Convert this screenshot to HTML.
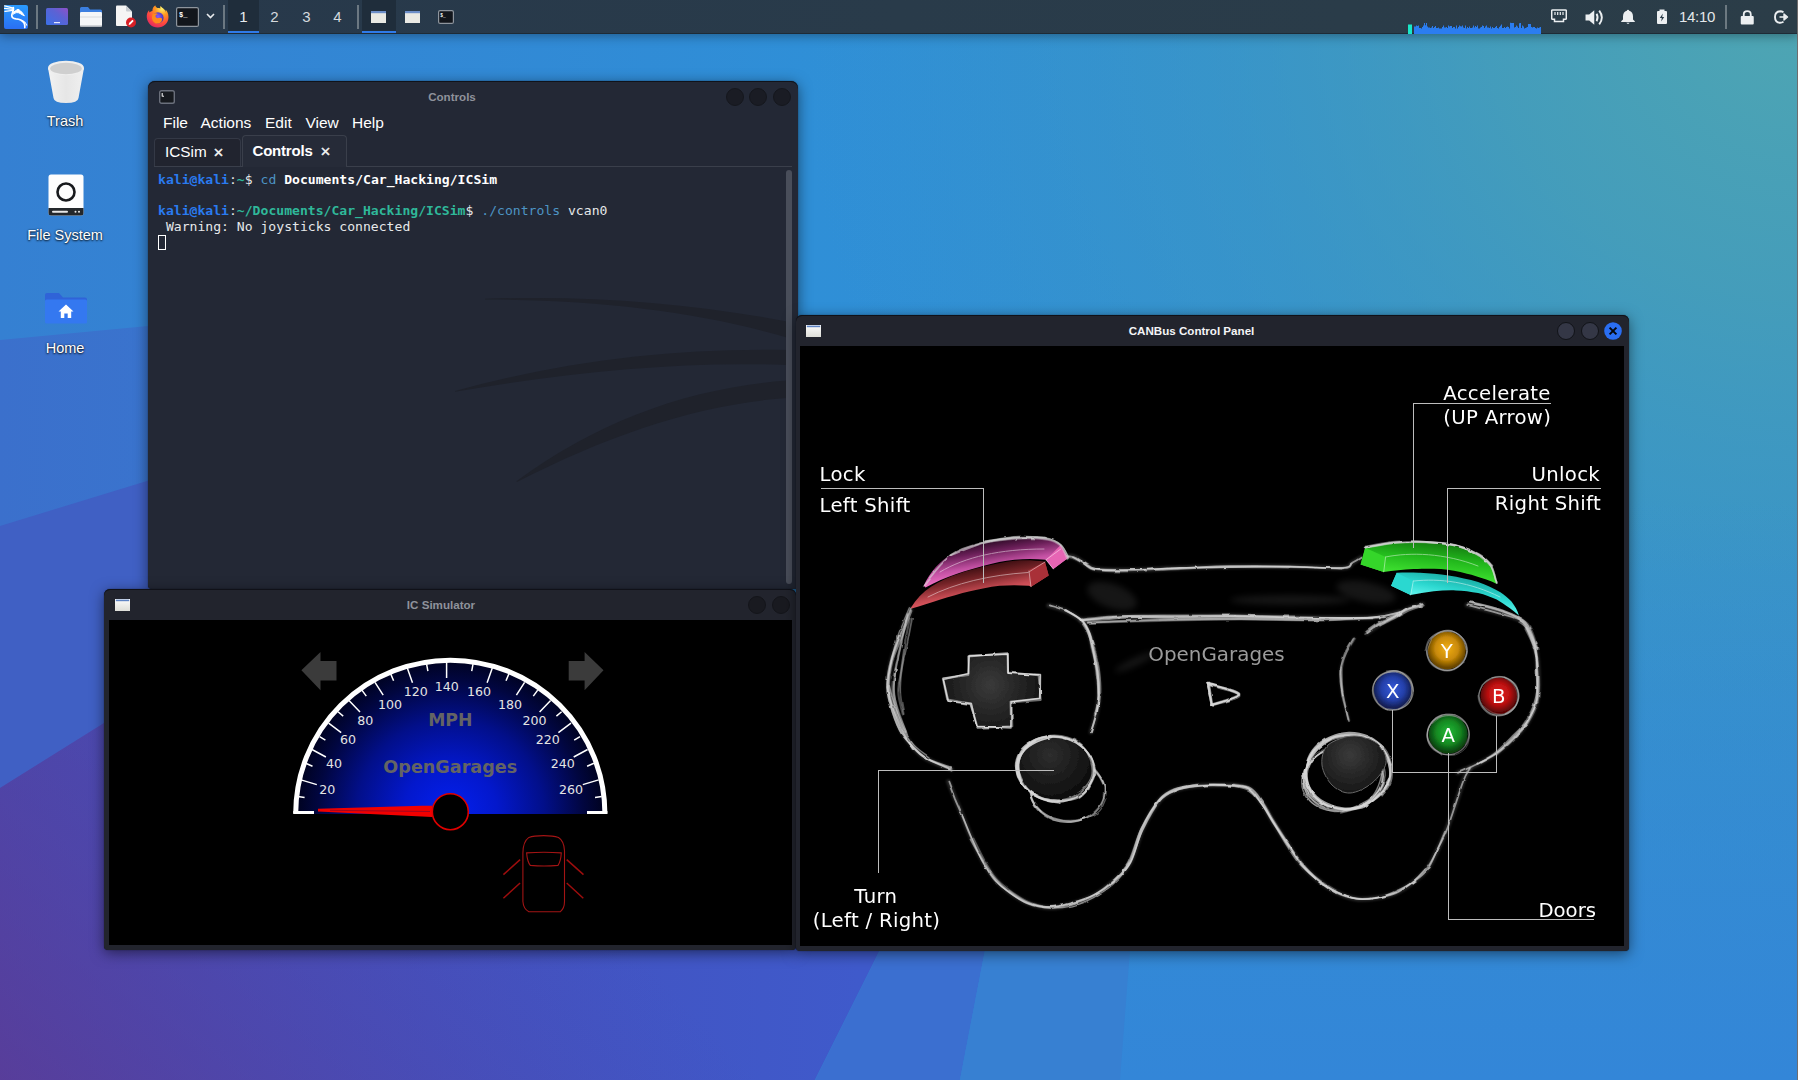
<!DOCTYPE html>
<html><head><meta charset="utf-8"><title>Kali desktop - ICSim</title>
<style>
*{box-sizing:border-box;margin:0;padding:0}
html,body{width:1798px;height:1080px;overflow:hidden;background:#3a7fd0}
body{position:relative;font-family:"Liberation Sans","DejaVu Sans",sans-serif;color:#fff}
.abs{position:absolute}
#wall{position:absolute;left:0;top:0;width:1798px;height:1080px}
#panel{position:absolute;left:0;top:0;width:1798px;height:34px;background:linear-gradient(90deg,#27384b,#293b4a 50%,#2b3d48);border-bottom:1px solid #1e2b36;box-shadow:0 2px 10px rgba(0,0,0,.35)}
.sep{position:absolute;top:5px;width:2px;height:24px;background:#7d8890;opacity:.8}
.ws{position:absolute;top:0;height:33px;width:31px;text-align:center;font-size:15px;line-height:33px;color:#d5dade}
.dicon{position:absolute;width:130px;text-align:center;font-size:14.5px;color:#fff;text-shadow:0 1px 2px rgba(0,0,0,.8),0 0 2px rgba(0,0,0,.6)}
.win{position:absolute;background:#23252f;border-radius:6px 6px 4px 4px;box-shadow:inset 0 1px 0 rgba(8,10,16,.7),0 0 1px rgba(8,10,16,.8),0 3px 14px rgba(0,0,0,.5)}
.title{position:absolute;left:0;right:0;text-align:center;font-size:11.600px;font-weight:bold;color:#8f929b}
.cbtn{position:absolute;width:18px;height:18px;border-radius:50%;background:#1a1c24;border:1px solid #15171d}
.mono{font-family:"DejaVu Sans Mono","Liberation Mono",monospace}
</style></head><body>

<svg id="wall" viewBox="0 0 1798 1080" width="1798" height="1080">
<defs>
<linearGradient id="wg0" x1="0" y1="0" x2="1" y2="0"><stop offset="0" stop-color="#3580d2"/><stop offset=".45" stop-color="#2f8fd7"/><stop offset="1" stop-color="#3590cd"/></linearGradient>
<radialGradient id="wgT" cx="1798" cy="0" r="1000" gradientUnits="userSpaceOnUse"><stop offset="0" stop-color="#4fa6b2"/><stop offset=".3" stop-color="#48a0b6" stop-opacity=".8"/><stop offset=".6" stop-color="#3f9abf" stop-opacity=".45"/><stop offset="1" stop-color="#3a96c4" stop-opacity="0"/></radialGradient>
<linearGradient id="wgB" x1="0" y1="0" x2="0" y2="1"><stop offset="0" stop-color="#3388d6" stop-opacity="0"/><stop offset="1" stop-color="#3386d8" stop-opacity="1"/></linearGradient>
<linearGradient id="wp1" x1="0" y1="0" x2="1" y2="0"><stop offset="0" stop-color="#3b70cc"/><stop offset="1" stop-color="#3b70cc" stop-opacity="0"/></linearGradient>
<linearGradient id="wp3" x1="0" y1="0" x2="860" y2="0" gradientUnits="userSpaceOnUse"><stop offset="0" stop-color="#4a49ae"/><stop offset=".5" stop-color="#4451be"/><stop offset="1" stop-color="#3f5acb"/></linearGradient>
<linearGradient id="wp3v" x1="400" y1="700" x2="0" y2="1080" gradientUnits="userSpaceOnUse"><stop offset="0" stop-color="#4a48b0" stop-opacity="0"/><stop offset="1" stop-color="#60368e" stop-opacity=".62"/></linearGradient>
</defs>
<rect width="1798" height="1080" fill="url(#wg0)"/>
<rect width="1798" height="1080" fill="url(#wgT)"/>
<rect x="900" y="500" width="898" height="580" fill="url(#wgB)"/>
<!-- left facets -->
<polygon points="0,340 148,326 790,265 790,1080 0,1080" fill="url(#wp1)"/>
<polygon points="0,526 160,477 790,330 790,1080 0,1080" fill="#4060c4"/>
<polygon points="0,788 104,723 600,440 880,950 815,1080 0,1080" fill="url(#wp3)"/>
<polygon points="0,788 104,723 600,440 880,950 815,1080 0,1080" fill="url(#wp3v)"/>
<!-- bottom facets -->
<polygon points="880,950 985,950 960,1080 815,1080" fill="#3b6fd0"/>
<polygon points="985,950 1130,950 1120,1080 960,1080" fill="#3780d2"/>
</svg>

<div id="panel">
 <!-- kali menu -->
 <svg class="abs" style="left:4px;top:5px" width="24" height="24" viewBox="0 0 24 24">
  <defs><linearGradient id="kg" x1="0" y1="0" x2="0" y2="1"><stop offset="0" stop-color="#2a9bfd"/><stop offset="1" stop-color="#2a6ff4"/></linearGradient></defs>
  <rect x="0" y="0" width="24" height="24" rx="2" fill="url(#kg)"/>
  <g fill="none" stroke="#fff" stroke-linecap="round" stroke-linejoin="round">
  <path d="M.6 .8L9.500 3.200M.6 3.300L9.200 4.400M1 6.400L9 5.300" stroke-width="1.300"/>
  <path d="M9.300 2.600C10.200 5.500 8.200 7.500 7.800 10.200C7.600 12.600 9.500 13.600 12 13.800C15.500 14 18 14.800 20 17.800C20.800 19.200 21 20.800 20.800 22.500" stroke-width="1.700"/>
  <path d="M18.600 15.800C20.800 16.800 22.300 18.200 22.800 20.200" stroke-width="1.100"/>
  <path d="M8.800 8C10.500 6.200 12.500 5 14 4.200C15.500 5 17 6 18.200 7.600C19 8.700 19.800 9.800 20.400 10.800C18.800 10.200 17.500 9.400 16 8.400C14 7.200 11.500 7.200 9.500 9z" stroke-width="1" fill="#fff"/>
  </g>
 </svg>
 <div class="sep" style="left:36px"></div>
 <!-- show desktop -->
 <svg class="abs" style="left:46px;top:8px" width="22" height="17" viewBox="0 0 22 17"><defs><linearGradient id="sd" x1="0" y1="1" x2="1" y2="0"><stop offset="0" stop-color="#3a70e8"/><stop offset=".6" stop-color="#5c62d4"/><stop offset="1" stop-color="#9050c8"/></linearGradient></defs><rect width="22" height="17" rx="1.500" fill="url(#sd)"/><rect x="8" y="14" width="6" height="1.200" fill="#e4e8ff"/></svg>
 <!-- file manager -->
 <svg class="abs" style="left:80px;top:6px" width="22" height="21" viewBox="0 0 22 21"><path d="M0 2.5Q0 1 1.5 1H8l2 2.5H20.5Q22 3.500 22 5V8H0z" fill="#3b7fe0"/><rect x="0" y="6" width="22" height="14.500" rx="1.2" fill="#f4f6f8"/><rect x="0" y="10.5" width="22" height="1" fill="#d5d9de"/><rect x="0" y="19" width="22" height="1.500" fill="#cfd3d8"/></svg>
 <!-- text editor -->
 <svg class="abs" style="left:115px;top:5px" width="22" height="23" viewBox="0 0 22 23"><path d="M1 1.500Q1 .5 2 .5H11l6 6V20Q17 21 16 21H2Q1 21 1 20z" fill="#f5f5f5"/><path d="M11 .5l6 6h-5Q11 6.500 11 5.500z" fill="#c9cdd2"/><circle cx="16" cy="17.500" r="5" fill="#d81f26"/><path d="M13.600 19.900l.5-1.800 3.300-3.300 1.300 1.300-3.300 3.300z" fill="#fff"/></svg>
 <!-- firefox -->
 <svg class="abs" style="left:146px;top:5px" width="23" height="23" viewBox="0 0 23 23"><defs><radialGradient id="ff1" cx=".7" cy=".15" r="1"><stop offset="0" stop-color="#fff36b"/><stop offset=".3" stop-color="#ff9a1f"/><stop offset=".65" stop-color="#ff4a3d"/><stop offset="1" stop-color="#d61f6e"/></radialGradient><radialGradient id="ff2" cx=".5" cy=".4" r=".6"><stop offset="0" stop-color="#8b5cf6"/><stop offset="1" stop-color="#3a2fb0"/></radialGradient></defs><path d="M11.500 3C9 1.500 9.500 .2 9.500 .2C6.500 2 6.300 5 6.500 6C5 6 3.500 7.500 3.500 7.500C3 6.500 3.200 5 3.200 5C1.200 7 .5 10 .8 12.500C1.500 18.500 6 22.500 11.700 22.500C17.800 22.500 22.500 18 22.500 12C22.500 8 20.500 5.500 19.500 4.800C20 6 20 7 20 7C18.500 3.500 15.500 2.500 14.500 1C14 2 14.200 3 14.500 3.600C13.500 3 12.500 3 11.500 3z" fill="url(#ff1)"/><circle cx="12" cy="12.800" r="5.600" fill="url(#ff2)"/><path d="M6.500 9.500C8 8 10.500 8 12 9.200C10.500 9.200 9.500 10 9.500 11.200C9.500 12.500 11 13.500 12.500 13C14 12.600 15 12.600 16 13.500C16.500 16.500 14 18.800 11.200 18.600C8 18.400 5.600 15.500 6 12C6.100 11 6.200 10.200 6.500 9.500z" fill="#ff8a1c"/></svg>
 <!-- terminal launcher -->
 <svg class="abs" style="left:176px;top:7px" width="23" height="20" viewBox="0 0 23 20"><rect x=".6" y=".6" width="21.800" height="18.800" rx="1.500" fill="#12161c" stroke="#8e959d" stroke-width="1.200"/><text x="3" y="9.500" font-family="Liberation Mono,monospace" font-size="7" font-weight="bold" fill="#fff">$_</text></svg>
 <svg class="abs" style="left:206px;top:12px" width="9" height="8" viewBox="0 0 9 8"><path d="M1 2l3.500 3.500L8 2" fill="none" stroke="#e8ebee" stroke-width="1.600"/></svg>
 <div class="sep" style="left:223px"></div>
 <!-- workspaces -->
 <div class="ws" style="left:228px;background:#1f2d3b;color:#e8ecef;border-bottom:2px solid #2f7bea">1</div>
 <div class="ws" style="left:259px">2</div>
 <div class="ws" style="left:291px">3</div>
 <div class="ws" style="left:322px">4</div>
 <div class="sep" style="left:357px"></div>
 <!-- window buttons -->
 <div class="abs" style="left:362px;top:0;width:34px;height:33px;background:#1f2d3b;border-bottom:2px solid #2f7bea"></div>
 <svg class="abs" style="left:371px;top:11px" width="15" height="12" viewBox="0 0 15 12"><rect width="15" height="12" fill="#e9e9e4"/><rect width="15" height="2.200" fill="#6c8ec8"/></svg>
 <svg class="abs" style="left:405px;top:11px" width="15" height="12" viewBox="0 0 15 12"><rect width="15" height="12" fill="#e9e9e4"/><rect width="15" height="2.200" fill="#6c8ec8"/></svg>
 <svg class="abs" style="left:438px;top:10px" width="16" height="14" viewBox="0 0 16 14"><rect x=".6" y=".6" width="14.800" height="12.800" rx="1.500" fill="#12161c" stroke="#8e959d" stroke-width="1.200"/><text x="2.200" y="6.500" font-family="Liberation Mono,monospace" font-size="4.500" font-weight="bold" fill="#fff">$_</text></svg>
 <!-- right side -->
 <svg class="abs" style="left:1407px;top:20px" width="135" height="14" viewBox="0 0 135 14">
  <rect x="1" y="4.500" width="4" height="9.500" fill="#19e8c8"/>
  <path d="M7 14V6.5h1V6.5h1V5.5h1V6.0h1V5.5h1V8.0h1V8.0h1V8.5h1V7.0h1V5.5h1V2.9h1V5.2h1V3.1h1V6.5h1V7.5h1V7.5h1V8.0h1V7.5h1V6.0h1V8.0h1V7.0h1V6.0h1V8.0h1V8.0h1V7.5h1V8.5h1V8.5h1V8.5h1V7.0h1V5.5h1V7.5h1V7.5h1V7.0h1V8.0h1V5.6h1V6.5h1V6.0h1V6.0h1V8.0h1V7.0h1V7.0h1V8.5h1V5.5h1V8.5h1V7.0h1V5.5h1V6.2h1V6.5h1V5.5h1V7.5h1V8.0h1V5.5h1V8.5h1V7.0h1V8.0h1V6.5h1V8.0h1V8.0h1V7.5h1V5.5h1V7.5h1V6.0h1V7.0h1V5.5h1V8.5h1V8.5h1V7.5h1V7.0h1V5.5h1V6.0h1V8.0h1V6.5h1V5.5h1V7.5h1V7.5h1V8.0h1V6.5h1V8.5h1V7.0h1V8.0h1V8.0h1V7.0h1V6.0h1V8.0h1V8.5h1V7.0h1V5.7h1V4.4h1V8.0h1V8.0h1V7.0h1V8.0h1V7.0h1V6.5h1V7.0h1V8.5h1V2.7h1V3.0h1V3.0h1V3.0h1V7.5h1V7.0h1V5.5h1V6.5h1V8.0h1V3.3h1V3.1h1V8.0h1V5.5h1V6.5h1V8.5h1V8.0h1V7.5h1V7.0h1V4.0h1V4.0h1V4.0h1V7.0h1V7.5h1V7.0h1V7.0h1V8.0h1V8.5h1V7.5h1V8.0h1V7.5h1V7.0h1V14z" fill="#2b7df0"/>
 </svg>
 <!-- network -->
 <svg class="abs" style="left:1551px;top:9px" width="16" height="14" viewBox="0 0 16 14"><path d="M1.500 1H14.500Q15.300 1 15.300 1.800V9.500Q15.300 10.300 14.500 10.300H12.500V12.500H3.500V10.300H1.500Q.7 10.300 .7 9.500V1.800Q.7 1 1.500 1z" fill="none" stroke="#eceff1" stroke-width="1.500"/><path d="M4 3v3M6.700 3v3M9.300 3v3M12 3v3" stroke="#eceff1" stroke-width="1.200"/></svg>
 <!-- volume -->
 <svg class="abs" style="left:1585px;top:8.500px" width="20" height="17" viewBox="0 0 19 16"><path d="M.5 5.200H4L8.800 1V15L4 10.800H.5z" fill="#eceff1"/><path d="M11 4.500Q13 8 11 11.500" fill="none" stroke="#eceff1" stroke-width="1.800"/><path d="M13.500 1.500Q18.500 8 13.500 14.500" fill="none" stroke="#eceff1" stroke-width="1.800"/></svg>
 <!-- bell -->
 <svg class="abs" style="left:1620px;top:9px" width="16" height="16" viewBox="0 0 16 16"><path d="M8 .8Q9 .8 9.200 1.800Q13 3 13 7.500V10.500L14.800 12.300V13H1.200V12.300L3 10.500V7.500Q3 3 6.800 1.800Q7 .8 8 .8z" fill="#eceff1"/><path d="M6.300 13.800Q8 16 9.700 13.800z" fill="#eceff1"/></svg>
 <!-- battery -->
 <svg class="abs" style="left:1656px;top:9px" width="12" height="16" viewBox="0 0 12 16"><path d="M3.500 .5h5v1.500H10Q11 2 11 3V14Q11 15 10 15H2Q1 15 1 14V3Q1 2 2 2h1.500z" fill="#eceff1"/><path d="M6.800 4.500L3.800 9h2l-.6 3.500L8.200 8h-2z" fill="#2a3b48"/></svg>
 <div class="abs" style="left:1679px;top:8px;font-size:15px;line-height:18px;color:#e4e8ea;letter-spacing:-.3px">14:10</div>
 <div class="sep" style="left:1725px"></div>
 <!-- lock -->
 <svg class="abs" style="left:1739.500px;top:9.500px" width="14.500" height="15" viewBox="0 0 14 15"><path d="M3.500 6.500V4.500Q3.500 1.200 7 1.200Q10.500 1.200 10.500 4.500V6.500" fill="none" stroke="#eceff1" stroke-width="1.800"/><rect x=".5" y="6" width="13" height="8.500" rx="1" fill="#eceff1"/></svg>
 <!-- logout -->
 <svg class="abs" style="left:1774px;top:10px" width="15" height="14" viewBox="0 0 15 14"><path d="M9.500 2.200Q7.800 1.200 6.200 1.200Q1 1.500 1 7Q1 12.500 6.200 12.800Q7.800 12.800 9.500 11.800" fill="none" stroke="#eceff1" stroke-width="1.900"/><path d="M5.500 7H12M10 4l3.500 3L10 10z" fill="#eceff1" stroke="#eceff1" stroke-width="1.400" stroke-linejoin="round"/></svg>
</div>
<div class="abs" style="left:1797px;top:0;width:1px;height:1080px;background:#706c6c"></div>

<!-- desktop icons -->
<svg class="abs" style="left:46px;top:58px" width="40" height="48" viewBox="0 0 40 48"><defs><linearGradient id="tb" x1="0" y1="0" x2="1" y2="0"><stop offset="0" stop-color="#f2f2f2"/><stop offset=".5" stop-color="#e6e6e6"/><stop offset="1" stop-color="#f0f0f0"/></linearGradient></defs><path d="M2 10L7.500 40Q8 45 20 45Q32 45 32.500 40L38 10z" fill="url(#tb)"/><ellipse cx="20" cy="10" rx="18" ry="7.300" fill="#eeeeee"/><ellipse cx="20" cy="10.500" rx="15.800" ry="5.800" fill="#cfcfcf"/></svg>
<div class="dicon" style="left:0;top:113px">Trash</div>
<svg class="abs" style="left:48px;top:174px" width="36" height="43" viewBox="0 0 36 43"><rect x=".5" y=".5" width="35" height="41" rx="2.500" fill="#fdfdfd"/><path d="M.5 34h35v5Q35.500 41.500 33 41.500H3Q.5 41.500 .5 39z" fill="#23272b"/><rect x="4" y="36.800" width="16" height="2" rx="1" fill="#e8e8e8"/><circle cx="27.500" cy="37.800" r="1" fill="#e8e8e8"/><circle cx="31" cy="37.800" r="1" fill="#e8e8e8"/><circle cx="18" cy="18" r="8.500" fill="none" stroke="#17191c" stroke-width="2.600"/></svg>
<div class="dicon" style="left:0;top:227px">File System</div>
<svg class="abs" style="left:45px;top:292px" width="42" height="32" viewBox="0 0 42 32"><path d="M0 3Q0 1 2 1H14l4 4.500H40Q42 5.500 42 7.500V12H0z" fill="#2f63d8"/><rect x="0" y="7.500" width="42" height="24" rx="1.500" fill="#3478f0"/><path d="M21 12.500L13.500 19.500H15.800V26H19.300V21.500H22.700V26H26.200V19.500H28.500z" fill="#fff"/></svg>
<div class="dicon" style="left:0;top:340px">Home</div>

<!-- terminal window -->
<div class="win" style="left:148px;top:81px;width:650px;height:508px;background:#232835;border-radius:7px 7px 4px 4px">
 <svg class="abs" style="left:0;top:86px" width="650" height="422" viewBox="148 167 650 422"><g fill="#1f222b">
  <path d="M485 298.800C590 295 690 303 787 321.500V337.500C700 312 600 300 485 299.600z"/>
  <path d="M455 391C560 362 670 348 787 350V365C680 361 570 372 455 391.800z"/>
  <path d="M516.400 481.300C600 420 690 388 787 380.600V398C700 404 610 434 517 482z"/>
 </g></svg>
 <svg class="abs" style="left:11px;top:9px" width="16" height="14" viewBox="0 0 16 14"><rect x=".7" y=".7" width="14.600" height="12.600" rx="1.800" fill="#171a1f" stroke="#6b707c" stroke-width="1.400"/><path d="M3.200 3v3.600M3.200 6.200h1.800" stroke="#eee" stroke-width="1.100" fill="none"/></svg>
 <div class="title" style="top:8px;left:-42px;line-height:15px">Controls</div>
 <div class="cbtn" style="left:578px;top:7px"></div>
 <div class="cbtn" style="left:601px;top:7px"></div>
 <div class="cbtn" style="left:625px;top:7px"></div>
 <div class="abs" style="left:15px;top:33px;font-size:15.500px;line-height:18px;color:#fff;white-space:nowrap">
  <span class="abs" style="left:0">File</span><span class="abs" style="left:37.500px">Actions</span><span class="abs" style="left:102px">Edit</span><span class="abs" style="left:142.500px">View</span><span class="abs" style="left:189px">Help</span>
 </div>
 <div class="abs" style="left:6px;top:85px;width:638px;height:1px;background:#3a3f4b"></div>
 <div class="abs" style="left:6px;top:57px;width:87px;height:28px;border:1px solid #343946;border-bottom:none;border-radius:4px 4px 0 0;background:#21242f"></div>
 <div class="abs" style="left:94px;top:54px;width:105px;height:32px;border:1px solid #3a3f4b;border-bottom:none;border-radius:4px 4px 0 0;background:#262b38"></div>
 <div class="abs" style="left:17px;top:62px;font-size:15.300px;line-height:18px;color:#fff">ICSim</div>
 <div class="abs" style="left:65.500px;top:62.500px;font-size:17px;line-height:18px;color:#f4f4f4;font-weight:normal;-webkit-text-stroke:.4px #f4f4f4">×</div>
 <div class="abs" style="left:104.500px;top:61px;font-size:15px;line-height:18px;color:#fff;font-weight:bold;letter-spacing:-.2px">Controls</div>
 <div class="abs" style="left:172.500px;top:61.500px;font-size:17px;line-height:18px;color:#f4f4f4;font-weight:normal;-webkit-text-stroke:.4px #f4f4f4">×</div>
 <pre class="mono abs" style="left:10px;top:90.700px;font-size:13.100px;line-height:15.800px;color:#e6e8ea;white-space:pre"><b style="color:#2a7bf0">kali@kali</b>:<b style="color:#2fb89a">~</b>$ <span style="color:#4d94c4">cd</span> <b style="color:#fff">Documents/Car_Hacking/ICSim</b>

<b style="color:#2a7bf0">kali@kali</b>:<b style="color:#2fb89a">~/Documents/Car_Hacking/ICSim</b>$ <span style="color:#4d94c4">./controls</span> vcan0
 Warning: No joysticks connected</pre>
 <div class="abs" style="left:10px;top:154px;width:8px;height:15px;border:1px solid #fff"></div>
 <div class="abs" style="left:638px;top:89px;width:6px;height:414px;border-radius:3px;background:#494e5a"></div>
</div>

<!-- IC Simulator window -->
<div class="win" style="left:104px;top:589px;width:692px;height:361px;background:#22242d">
 <svg class="abs" style="left:11px;top:10px" width="15" height="12" viewBox="0 0 15 12"><defs><linearGradient id="wi" x1="0" y1="0" x2="0" y2="1"><stop offset="0" stop-color="#fdfdfd"/><stop offset="1" stop-color="#deded8"/></linearGradient></defs><rect width="15" height="12" fill="url(#wi)"/><rect x=".8" y=".6" width="13.400" height="1.600" fill="#5f84c4"/></svg>
 <div class="title" style="top:8px;left:-18px;line-height:15px">IC Simulator</div>
 <div class="cbtn" style="left:644px;top:7px;background:#191a20;border-color:#14151a"></div>
 <div class="cbtn" style="left:668px;top:7px;background:#191a20;border-color:#14151a"></div>
 <div class="abs" style="left:5px;top:31px;width:683px;height:325px;background:#000;overflow:hidden">
 <svg class="abs" style="left:0;top:0" width="683" height="325" viewBox="109 620 683 325" font-family="DejaVu Sans, Liberation Sans, sans-serif">
  <defs>
   <radialGradient id="spd" cx="450.3" cy="813.0" r="156" gradientUnits="userSpaceOnUse"><stop offset="0" stop-color="#0420f0"/><stop offset=".3" stop-color="#0318cc"/><stop offset=".6" stop-color="#020f8a"/><stop offset=".85" stop-color="#010640"/><stop offset="1" stop-color="#00021c"/></radialGradient>
  </defs>
  <path d="M294 814A156.300 155 0 0 1 606.600 814z" fill="url(#spd)"/>
  <path d="M295.700 813.500A154.600 153.400 0 0 1 604.900 813.500" fill="none" stroke="#fff" stroke-width="5"/>
  <path d="M293.300 812.600H314M587 812.600H607.400" stroke="#fff" stroke-width="3" fill="none"/>
  <path d="M446.6 661.8L446.6 678.0M426.6 664.2L427.9 671.2M473.0 664.2L471.7 671.2M407.3 668.1L412.5 682.7M492.3 668.1L487.1 682.7M390.7 673.9L393.6 680.7M508.9 673.9L506.0 680.7M375.0 682.3L383.2 695.2M524.6 682.3L516.4 695.2M361.9 690.1L366.3 696.1M537.7 690.1L533.3 696.1M349.0 700.4L360.0 711.9M550.6 700.4L539.6 711.9M338.0 711.7L343.2 716.1M561.6 711.7L556.4 716.1M328.6 723.2L341.2 732.6M571.0 723.2L558.4 732.6M319.6 736.6L325.4 740.2M580.0 736.6L574.2 740.2M312.0 749.5L325.9 757.0M587.6 749.5L573.7 757.0M305.7 763.3L312.5 766.2M593.9 763.3L587.1 766.2M301.0 779.9L316.8 784.6M598.6 779.9L582.8 784.6M297.9 796.4L304.6 797.6M601.7 796.4L595.0 797.6" stroke="#fff" stroke-width="1.500" fill="none"/>
  <g font-size="12.600" fill="#e4e4e4" text-anchor="middle"><text x="327.3" y="793.5">20</text><text x="334.1" y="768.2">40</text><text x="348.1" y="743.9">60</text><text x="365.3" y="725.4">80</text><text x="390.0" y="708.8">100</text><text x="415.7" y="696.2">120</text><text x="446.8" y="691.3">140</text><text x="478.9" y="696.2">160</text><text x="510.1" y="708.8">180</text><text x="534.6" y="725.4">200</text><text x="547.7" y="743.9">220</text><text x="562.7" y="768.2">240</text><text x="571.0" y="793.5">260</text></g>
  <text x="450.300" y="725.800" font-size="17.300" font-weight="bold" fill="#646464" text-anchor="middle">MPH</text>
  <text x="450.300" y="772.500" font-size="17.600" font-weight="bold" fill="#646464" text-anchor="middle">OpenGarages</text>
  <polygon points="318,808.800 422,805.800 432,805.800 432,817 422,816.600 318,811.600" fill="#f20000"/>
  <path d="M330 810.300L430 811.500" stroke="#7a0a30" stroke-width="1" opacity=".7"/>
  <circle cx="450.300" cy="811.700" r="18" fill="#000" stroke="#e00000" stroke-width="1.600"/>
  <polygon points="301.400,670.200 320.500,652 320.500,661 336.500,661 336.500,680.500 320.500,680.500 320.500,690.200" fill="#3b3b3b"/>
  <polygon points="603.500,670.200 584.600,652 584.600,661 568.700,661 568.700,680.500 584.600,680.500 584.600,690.200" fill="#3b3b3b"/>
  <g fill="none" stroke="#a31414" stroke-width="1.100">
   <path d="M543.700 835.600C537 835.600 531.500 836.400 528.900 837.400C524.500 840.500 522.900 847 522.900 853.300V901.500C523.200 906 525.500 910 528.900 911.700H560.400C563 909.500 564.500 906 564.500 901.500V850.600C564.200 845 562.500 840 558.500 837.500C555 836.300 550 835.600 543.700 835.600z"/>
   <path d="M526.600 852.900C538 852 550 852 561.300 852.900C561 858 560 862.500 558 865.400C549 866.200 539 866.200 530.300 865.400C528 862.500 527 858 526.600 852.900z"/>
  </g>
  <path d="M503.400 874.600L520.100 859.600M503.400 898.200L520.100 883M566.700 859.600L583.500 874.600M566.700 883L583.300 898.200" stroke="#9c0d0d" stroke-width="1.500" fill="none"/>
 </svg>
 </div>
</div>

<!-- CANBus Control Panel window -->
<div class="win" style="left:796px;top:315px;width:833px;height:636px;background:#22242d;z-index:3">
 <svg class="abs" style="left:10px;top:10px" width="15" height="12" viewBox="0 0 15 12"><rect width="15" height="12" fill="url(#wi)"/><rect x=".8" y=".6" width="13.400" height="1.600" fill="#5f84c4"/></svg>
 <div class="title" style="top:8px;left:-42px;line-height:15px;color:#f4f4f6">CANBus Control Panel</div>
 <div class="cbtn" style="left:761px;top:7px;background:#343746;border-color:#111318"></div>
 <div class="cbtn" style="left:785px;top:7px;background:#343746;border-color:#111318"></div>
 <svg class="abs" style="left:808px;top:7px" width="18" height="18" viewBox="0 0 18 18"><circle cx="9" cy="9" r="8.800" fill="#2a6ef2"/><path d="M5.600 5.600L12.400 12.400M12.400 5.600L5.600 12.400" stroke="#05070c" stroke-width="2"/></svg>
 <div class="abs" style="left:4px;top:31px;width:824px;height:600px;background:#000;overflow:hidden">
 <svg class="abs" style="left:0;top:0" width="824" height="600" viewBox="800 346 824 600" font-family="DejaVu Sans, Liberation Sans, sans-serif" fill="none" stroke-linecap="round">
 <defs>
  <filter id="rough" x="-5%" y="-5%" width="110%" height="110%"><feTurbulence type="fractalNoise" baseFrequency="0.09" numOctaves="2" seed="3" result="n"/><feDisplacementMap in="SourceGraphic" in2="n" scale="2.600" xChannelSelector="R" yChannelSelector="G"/><feGaussianBlur stdDeviation=".6"/></filter>
  <filter id="blur2" x="-5%" y="-5%" width="110%" height="110%"><feGaussianBlur stdDeviation="1.300"/></filter>
  <filter id="blur3"><feGaussianBlur stdDeviation="3"/></filter>
  <filter id="blur1"><feGaussianBlur stdDeviation=".6"/></filter>
  <linearGradient id="pinkg" x1="990" y1="538" x2="996" y2="575" gradientUnits="userSpaceOnUse"><stop offset="0" stop-color="#1c0418"/><stop offset=".35" stop-color="#6a1f58"/><stop offset=".7" stop-color="#c250a2"/><stop offset="1" stop-color="#f070c4"/></linearGradient>
  <linearGradient id="redg" x1="975" y1="562" x2="982" y2="600" gradientUnits="userSpaceOnUse"><stop offset="0" stop-color="#240508"/><stop offset=".4" stop-color="#722226"/><stop offset=".75" stop-color="#c44a52"/><stop offset="1" stop-color="#f06068"/></linearGradient>
  <linearGradient id="greeng" x1="1430" y1="541" x2="1426" y2="575" gradientUnits="userSpaceOnUse"><stop offset="0" stop-color="#147a10"/><stop offset=".5" stop-color="#22b81c"/><stop offset="1" stop-color="#3ee030"/></linearGradient>
  <linearGradient id="cyang" x1="1455" y1="574" x2="1450" y2="600" gradientUnits="userSpaceOnUse"><stop offset="0" stop-color="#18a8a0"/><stop offset=".6" stop-color="#2cd8d0"/><stop offset="1" stop-color="#58f0e8"/></linearGradient>
  <radialGradient id="dpadg" cx="990" cy="685" r="50" gradientUnits="userSpaceOnUse"><stop offset="0" stop-color="#3a3a3a"/><stop offset="1" stop-color="#161616"/></radialGradient>
  <radialGradient id="stkg" cx="1050" cy="755" r="45" gradientUnits="userSpaceOnUse"><stop offset="0" stop-color="#2e2e2e"/><stop offset="1" stop-color="#0e0e0e"/></radialGradient>
  <radialGradient id="stkg2" cx="1350" cy="755" r="40" gradientUnits="userSpaceOnUse"><stop offset="0" stop-color="#3a3a3a"/><stop offset="1" stop-color="#151515"/></radialGradient>
  <radialGradient id="gy" cx="1446.8" cy="648.5" r="19" gradientUnits="userSpaceOnUse"><stop offset="0" stop-color="#f0ae18"/><stop offset=".6" stop-color="#c98a08"/><stop offset="1" stop-color="#6a4700"/></radialGradient><radialGradient id="gx" cx="1392.8" cy="688.7" r="19" gradientUnits="userSpaceOnUse"><stop offset="0" stop-color="#3558d8"/><stop offset=".6" stop-color="#2440aa"/><stop offset="1" stop-color="#131f55"/></radialGradient><radialGradient id="gb" cx="1498.8" cy="694" r="18.5" gradientUnits="userSpaceOnUse"><stop offset="0" stop-color="#e82020"/><stop offset=".6" stop-color="#b81010"/><stop offset="1" stop-color="#5a0606"/></radialGradient><radialGradient id="ga" cx="1448.2" cy="732.3" r="19.5" gradientUnits="userSpaceOnUse"><stop offset="0" stop-color="#22b838"/><stop offset=".6" stop-color="#158a22"/><stop offset="1" stop-color="#0a4410"/></radialGradient>
 </defs>
 <g filter="url(#blur3)" fill="#8a8a8a" opacity=".16">
<ellipse cx="1112" cy="596" rx="26" ry="12" transform="rotate(20 1112 596)"/>
<ellipse cx="1366" cy="592" rx="30" ry="10" transform="rotate(12 1366 592)"/>
<ellipse cx="1290" cy="600" rx="60" ry="5"/>
<ellipse cx="1135" cy="662" rx="22" ry="4" transform="rotate(-25 1135 662)"/>
</g>
 <g filter="url(#blur2)"><path d="M911.0 609.0C909.2 613.5 903.2 627.3 900.0 636.0C896.8 644.7 893.4 652.5 891.5 661.0C889.6 669.5 888.4 679.7 888.5 687.0C888.6 694.3 889.8 697.7 892.0 705.0C894.2 712.3 898.1 723.6 901.6 730.6C905.1 737.6 908.8 742.3 913.0 747.0C917.2 751.7 920.6 755.3 927.0 759.0C933.4 762.7 947.4 767.6 951.5 769.3" stroke="#c8c8c8" stroke-width="4.5" opacity="0.2"/>
<path d="M948.4 781.5C949.5 784.2 952.8 792.6 955.0 798.0C957.2 803.4 958.9 807.2 961.7 814.0C964.5 820.8 968.3 830.8 972.0 839.0C975.7 847.2 980.0 856.2 984.0 863.0C988.0 869.8 991.9 875.2 996.0 880.0C1000.1 884.8 1003.2 887.7 1008.5 891.5C1013.8 895.3 1021.2 900.3 1028.0 903.0C1034.8 905.7 1042.0 907.6 1049.3 907.8C1056.6 908.0 1064.5 906.0 1072.0 904.0C1079.5 902.0 1087.2 899.3 1094.0 895.6C1100.8 891.9 1107.0 887.4 1113.0 882.0C1119.0 876.6 1125.0 871.9 1130.0 863.0C1135.0 854.1 1137.8 839.0 1142.8 828.5C1147.8 818.0 1154.5 806.4 1160.0 800.0C1165.5 793.6 1170.1 792.3 1176.0 790.0C1181.9 787.7 1187.9 786.8 1195.6 786.0C1203.3 785.2 1213.3 784.7 1222.0 785.0C1230.7 785.3 1241.3 785.0 1248.0 788.0C1254.7 791.0 1257.8 797.4 1262.0 803.0C1266.2 808.6 1268.8 814.8 1273.0 821.5C1277.2 828.2 1282.3 836.0 1287.0 843.0C1291.7 850.0 1295.8 857.5 1301.0 863.7C1306.2 869.9 1312.2 875.3 1318.0 880.0C1323.8 884.7 1329.6 888.8 1336.0 892.0C1342.4 895.2 1349.9 898.0 1356.6 899.0C1363.3 900.0 1369.5 899.0 1376.0 898.0C1382.5 897.0 1389.5 895.5 1395.5 893.0C1401.5 890.5 1406.8 886.9 1412.0 883.0C1417.2 879.1 1422.4 875.2 1426.6 869.9C1430.8 864.6 1433.8 857.5 1437.0 851.0C1440.2 844.5 1443.0 838.5 1446.0 831.0C1449.0 823.5 1452.1 814.4 1455.0 806.0C1457.9 797.6 1461.0 786.7 1463.5 780.4C1466.0 774.1 1468.9 770.1 1470.0 768.0" stroke="#c8c8c8" stroke-width="4.5" opacity="0.2"/>
<path d="M1467.0 605.0C1472.0 606.3 1488.2 610.3 1496.7 612.6C1505.2 614.9 1512.8 616.4 1518.0 619.0C1523.2 621.6 1524.8 622.9 1527.7 628.0C1530.6 633.1 1533.8 641.8 1535.6 649.6C1537.4 657.4 1538.1 666.6 1538.3 675.0C1538.5 683.4 1538.8 692.2 1537.0 700.0C1535.2 707.8 1531.5 715.7 1527.7 722.0C1523.9 728.3 1519.2 732.8 1514.0 738.0C1508.8 743.2 1502.6 748.7 1496.6 753.0C1490.6 757.3 1484.5 760.7 1478.0 764.0C1471.5 767.3 1461.1 771.2 1457.7 772.7" stroke="#c8c8c8" stroke-width="4.5" opacity="0.2"/>
<path d="M1062.0 556.0C1064.0 556.2 1070.0 555.8 1073.7 557.0C1077.4 558.2 1080.3 561.0 1084.0 563.0C1087.7 565.0 1088.3 567.8 1096.0 569.0C1103.7 570.2 1116.0 570.2 1130.0 570.0C1144.0 569.8 1163.2 568.6 1180.0 568.0C1196.8 567.4 1212.4 566.6 1230.7 566.4C1249.0 566.1 1271.3 566.2 1290.0 566.5C1308.7 566.8 1332.7 568.6 1343.0 568.0C1353.3 567.4 1349.0 564.7 1352.0 563.0C1355.0 561.3 1359.5 558.5 1361.0 557.6" stroke="#c8c8c8" stroke-width="4.5" opacity="0.2"/>
<path d="M1081.0 620.0C1085.0 619.7 1096.8 618.6 1105.0 618.0C1113.2 617.4 1117.5 616.5 1130.0 616.3C1142.5 616.0 1163.2 616.6 1180.0 616.5C1196.8 616.4 1210.7 615.5 1230.7 615.7C1250.7 615.9 1276.5 617.2 1300.0 617.5C1323.5 617.8 1354.9 618.3 1371.5 617.4C1388.1 616.5 1394.9 612.9 1399.6 612.0" stroke="#c8c8c8" stroke-width="4.5" opacity="0.2"/>
<path d="M1048.5 605.5C1051.4 606.4 1060.5 608.4 1066.0 611.0C1071.5 613.6 1077.8 617.3 1081.6 621.0C1085.4 624.7 1087.1 628.5 1089.0 633.0C1090.9 637.5 1091.6 641.5 1093.0 648.0C1094.4 654.5 1096.5 664.2 1097.5 672.0C1098.5 679.8 1099.2 687.8 1099.0 695.0C1098.8 702.2 1097.3 708.8 1096.0 715.0C1094.7 721.2 1091.8 729.2 1091.0 732.0" stroke="#c8c8c8" stroke-width="4.5" opacity="0.2"/>
<path d="M1422.6 604.3C1420.2 605.1 1412.6 607.0 1408.0 609.0C1403.4 611.0 1399.5 613.8 1394.8 616.3C1390.1 618.8 1384.6 621.2 1380.0 624.0C1375.4 626.8 1369.2 631.5 1367.0 633.0" stroke="#c8c8c8" stroke-width="4.5" opacity="0.2"/>
<path d="M1354.0 638.5C1352.7 640.9 1348.2 648.1 1346.0 653.0C1343.8 657.9 1341.8 663.2 1341.0 668.0C1340.2 672.8 1340.7 677.3 1341.0 682.0C1341.3 686.7 1341.8 689.7 1343.0 696.0C1344.2 702.3 1347.6 716.0 1348.5 720.0" stroke="#c8c8c8" stroke-width="3" opacity="0.12"/></g>
 <g filter="url(#rough)">
 <path d="M910.8 608.7C909.1 613.2 903.4 626.9 900.1 635.6C896.9 644.3 893.5 652.3 891.5 660.9C889.5 669.4 888.1 679.7 888.1 687.0C888.1 694.4 889.4 697.7 891.6 704.9C893.8 712.1 897.7 723.2 901.2 730.2C904.8 737.3 908.7 742.5 912.9 747.3C917.2 752.0 920.2 755.0 926.7 758.8C933.1 762.5 947.5 767.9 951.6 769.7" stroke="#d8d8d8" stroke-width="1.78" opacity="0.62"/>
<path d="M889.4 685.6C890.2 688.5 891.7 696.0 894.1 703.0C896.4 710.1 900.2 720.9 903.4 727.9C906.7 734.8 909.3 739.7 913.6 744.6C917.9 749.5 926.6 755.1 929.2 757.2" stroke="#d8d8d8" stroke-width="1.33" opacity="0.55"/>
<path d="M888.3 685.9C889.1 688.8 891.0 696.1 893.4 703.2C895.7 710.3 898.8 721.3 902.3 728.5C905.8 735.8 909.9 741.7 914.1 746.7C918.4 751.8 921.6 755.3 927.9 759.0C934.2 762.7 947.8 767.2 951.7 768.9" stroke="#d8d8d8" stroke-width="1.88" opacity="0.30"/>
<path d="M886.9 686.7C887.7 689.6 889.1 696.7 891.5 703.8C893.9 710.9 897.9 722.3 901.2 729.4C904.6 736.5 910.1 743.4 911.8 746.2" stroke="#d8d8d8" stroke-width="1.18" opacity="0.42"/>
<path d="M899.7 635.9C898.3 639.8 893.3 651.3 891.2 659.4C889.0 667.5 887.2 677.2 887.0 684.6C886.9 692.1 888.2 696.5 890.3 704.1C892.4 711.7 896.1 723.3 899.6 730.1C903.1 737.0 907.1 740.5 911.4 745.1C915.7 749.8 918.7 754.0 925.3 757.8C931.9 761.5 946.7 765.9 951.0 767.5" stroke="#d8d8d8" stroke-width="1.95" opacity="0.60"/>
<path d="M911.4 610.8C909.8 615.2 904.9 628.9 901.7 637.3C898.5 645.8 894.4 653.2 892.2 661.6C890.1 670.0 888.8 680.6 888.8 687.8C888.8 695.1 889.9 697.8 892.3 705.1C894.7 712.3 900.0 724.1 903.4 731.3C906.8 738.5 911.0 745.3 912.6 748.1" stroke="#d8d8d8" stroke-width="1.96" opacity="0.49"/>
<path d="M909.4 607.8C907.4 612.5 900.8 627.3 897.8 636.0C894.8 644.7 893.2 651.8 891.5 660.0C889.7 668.2 887.5 677.8 887.2 685.1C886.9 692.3 887.6 696.1 889.7 703.7C891.8 711.3 896.2 723.7 899.7 730.5C903.3 737.4 906.4 740.3 910.9 744.9C915.4 749.5 920.5 754.2 926.9 758.2C933.3 762.1 945.6 766.8 949.3 768.5" stroke="#d8d8d8" stroke-width="1.33" opacity="0.50"/>
<path d="M907.7 614.3C906.7 618.6 904.0 631.4 902.0 640.3C900.0 649.2 897.2 659.5 895.9 667.8C894.6 676.1 893.7 682.6 894.0 690.0C894.4 697.4 896.1 705.1 898.1 712.1C900.1 719.1 904.9 728.8 906.2 732.2" stroke="#d8d8d8" stroke-width="1.78" opacity="0.45"/>
<path d="M902.2 641.9C901.2 646.4 897.8 660.7 896.3 668.9C894.8 677.1 892.9 683.7 893.1 691.1C893.2 698.6 896.7 709.8 897.4 713.6" stroke="#d8d8d8" stroke-width="1.24" opacity="0.27"/>
<path d="M907.4 614.0C906.4 618.1 903.8 630.1 901.8 639.1C899.8 648.0 897.0 659.3 895.4 667.7C893.8 676.1 891.8 682.1 892.2 689.5C892.6 696.8 895.7 704.8 898.0 711.7C900.2 718.6 904.3 727.8 905.6 731.1" stroke="#d8d8d8" stroke-width="1.87" opacity="0.30"/>
<path d="M896.2 668.6C895.9 672.6 893.6 684.9 894.2 692.3C894.7 699.6 897.3 705.6 899.5 712.7C901.8 719.7 906.2 730.8 907.6 734.4" stroke="#d8d8d8" stroke-width="1.17" opacity="0.35"/>
<path d="M895.6 668.3C895.2 671.9 893.3 682.5 893.3 689.9C893.4 697.3 894.0 705.8 896.0 712.9C897.9 720.0 903.6 729.3 905.1 732.5" stroke="#d8d8d8" stroke-width="1.92" opacity="0.23"/>
<path d="M912.2 618.3C911.3 622.6 908.8 635.9 907.1 644.2C905.4 652.6 903.2 660.3 902.0 668.2C900.9 676.2 900.0 684.1 900.3 691.7C900.6 699.4 903.2 710.3 903.7 714.0" stroke="#d8d8d8" stroke-width="1.78" opacity="0.35"/>
<path d="M911.6 618.1C910.9 622.4 909.3 635.5 907.6 644.0C905.9 652.6 902.6 661.1 901.4 669.2C900.2 677.3 900.6 688.9 900.4 692.8" stroke="#d8d8d8" stroke-width="1.21" opacity="0.16"/>
<path d="M909.8 618.7C909.0 622.8 906.2 635.3 904.9 643.5C903.5 651.7 902.9 660.1 901.8 668.1C900.7 676.1 898.0 683.7 898.2 691.4C898.3 699.1 902.0 710.6 902.8 714.5" stroke="#d8d8d8" stroke-width="2.02" opacity="0.33"/>
<path d="M905.7 644.2C904.9 648.0 902.1 659.4 901.0 667.2C899.8 675.0 899.1 687.1 898.7 691.0" stroke="#d8d8d8" stroke-width="1.28" opacity="0.18"/>
<path d="M948.4 781.7C949.4 784.4 952.6 792.8 954.7 798.3C956.9 803.7 958.6 807.3 961.5 814.1C964.3 820.9 968.0 831.0 971.8 839.1C975.6 847.3 980.3 856.1 984.3 862.9C988.3 869.7 992.0 875.2 995.9 879.9C999.9 884.7 1002.9 887.6 1008.2 891.4C1013.6 895.3 1021.0 900.3 1027.9 903.0C1034.8 905.7 1042.1 907.6 1049.4 907.7C1056.8 907.9 1064.5 905.9 1072.0 903.9C1079.5 901.8 1087.4 899.0 1094.3 895.3C1101.2 891.7 1107.3 887.3 1113.3 881.8C1119.3 876.4 1125.3 871.6 1130.2 862.7C1135.1 853.9 1137.7 839.2 1142.7 828.8C1147.6 818.3 1154.2 806.6 1159.8 800.2C1165.4 793.7 1170.2 792.5 1176.2 790.2C1182.2 787.9 1188.1 787.2 1195.7 786.3C1203.3 785.4 1213.2 784.7 1221.9 785.0C1230.7 785.3 1241.4 785.0 1248.0 788.0C1254.7 791.0 1257.7 797.3 1261.9 802.9C1266.1 808.4 1269.0 814.6 1273.2 821.3C1277.4 828.0 1282.7 835.8 1287.3 842.8C1291.8 849.9 1295.6 857.2 1300.7 863.4C1305.8 869.6 1312.0 875.3 1317.8 880.1C1323.7 884.8 1329.4 888.7 1335.8 891.8C1342.2 894.9 1349.6 897.7 1356.4 898.7C1363.1 899.7 1369.8 898.9 1376.3 897.9C1382.9 897.0 1389.9 895.5 1395.8 893.1C1401.7 890.6 1406.5 886.9 1411.7 883.1C1416.9 879.3 1422.7 875.6 1426.9 870.2C1431.1 864.8 1433.6 857.3 1436.8 850.8C1440.1 844.3 1443.3 838.6 1446.3 831.1C1449.3 823.6 1452.2 814.2 1455.0 805.8C1457.9 797.4 1461.0 786.8 1463.5 780.5C1465.9 774.2 1468.8 770.2 1469.9 768.2" stroke="#d8d8d8" stroke-width="1.78" opacity="0.62"/>
<path d="M1112.4 881.9C1115.0 878.8 1123.1 872.2 1127.9 863.3C1132.8 854.4 1136.1 839.0 1141.3 828.5C1146.6 818.0 1154.0 806.8 1159.6 800.2C1165.2 793.6 1169.4 791.6 1175.1 789.2C1180.8 786.8 1186.3 786.3 1193.8 785.6C1201.2 784.9 1211.1 784.2 1219.8 784.8C1228.6 785.3 1239.7 786.0 1246.4 788.9C1253.2 791.8 1256.1 796.8 1260.4 802.2C1264.8 807.5 1268.3 814.2 1272.4 821.0C1276.6 827.8 1280.7 835.7 1285.2 842.7C1289.6 849.8 1293.7 857.2 1299.0 863.3C1304.3 869.5 1311.0 874.9 1317.0 879.6C1323.1 884.2 1328.8 888.1 1335.3 891.3C1341.7 894.4 1349.3 897.3 1355.9 898.4C1362.5 899.5 1368.6 898.7 1374.9 897.8C1381.2 897.0 1388.0 895.6 1393.9 893.3C1399.7 890.9 1404.6 887.8 1410.0 883.8C1415.3 879.9 1421.6 874.7 1426.0 869.3C1430.4 863.9 1433.3 857.8 1436.5 851.5C1439.6 845.2 1443.5 834.8 1444.9 831.5" stroke="#d8d8d8" stroke-width="1.69" opacity="0.53"/>
<path d="M973.5 838.4C975.5 842.3 981.4 854.9 985.2 861.6C988.9 868.2 992.0 873.7 996.0 878.4C999.9 883.1 1003.5 885.9 1009.1 889.8C1014.6 893.8 1022.5 899.3 1029.4 902.2C1036.3 905.0 1043.1 906.9 1050.3 907.1C1057.6 907.2 1065.9 905.0 1073.1 903.0C1080.4 901.1 1087.1 898.9 1093.9 895.2C1100.8 891.5 1108.1 886.5 1114.3 881.1C1120.4 875.6 1126.1 871.2 1130.9 862.4C1135.6 853.5 1137.9 838.7 1142.8 828.0C1147.7 817.3 1154.8 804.7 1160.4 798.3C1166.0 791.9 1170.5 791.6 1176.4 789.5C1182.3 787.3 1188.0 786.4 1195.9 785.5C1203.8 784.6 1214.9 783.8 1223.7 784.1C1232.5 784.3 1242.0 783.9 1248.6 787.0C1255.2 790.1 1258.9 796.9 1263.1 802.5C1267.4 808.2 1270.0 814.3 1274.0 820.8C1278.0 827.3 1282.5 834.4 1287.0 841.4C1291.6 848.5 1296.1 856.9 1301.4 863.2C1306.6 869.5 1312.7 874.7 1318.5 879.2C1324.2 883.7 1333.0 888.4 1335.9 890.3" stroke="#d8d8d8" stroke-width="1.64" opacity="0.33"/>
<path d="M962.1 814.7C963.9 818.9 969.3 832.1 972.8 840.2C976.3 848.2 979.3 856.5 983.2 863.3C987.1 870.1 991.9 876.3 996.0 881.1C1000.2 885.9 1002.9 888.2 1008.2 892.0C1013.5 895.8 1020.8 901.2 1027.8 903.8C1034.7 906.5 1042.5 907.7 1050.0 908.1C1057.4 908.4 1065.3 907.5 1072.5 905.8C1079.8 904.0 1086.5 901.2 1093.4 897.6C1100.2 893.9 1107.4 889.5 1113.5 883.9C1119.5 878.3 1124.8 872.8 1129.7 863.9C1134.5 855.1 1137.6 841.1 1142.7 830.6C1147.8 820.1 1154.7 807.6 1160.2 800.9C1165.8 794.3 1170.2 793.2 1175.9 790.8C1181.7 788.4 1187.1 787.3 1194.8 786.5C1202.6 785.6 1213.7 785.4 1222.7 785.8C1231.7 786.2 1242.4 785.7 1248.9 788.7C1255.3 791.8 1257.7 798.6 1261.6 804.2C1265.6 809.8 1268.1 815.7 1272.5 822.4C1276.9 829.2 1283.0 837.8 1287.9 844.9C1292.7 852.0 1296.5 858.9 1301.6 865.1C1306.8 871.3 1313.1 877.2 1318.8 882.0C1324.6 886.7 1333.3 891.6 1336.2 893.6" stroke="#d8d8d8" stroke-width="1.23" opacity="0.59"/>
<path d="M1008.9 890.6C1012.1 892.6 1021.1 899.6 1027.8 902.3C1034.5 905.0 1041.8 906.7 1049.1 906.8C1056.3 906.9 1063.6 905.0 1071.2 902.9C1078.8 900.8 1087.9 897.8 1094.8 894.2C1101.8 890.6 1107.0 886.9 1113.0 881.5C1119.0 876.1 1125.8 870.8 1130.7 861.8C1135.5 852.7 1137.5 837.7 1142.4 827.3C1147.2 816.9 1154.1 805.4 1159.8 799.2C1165.6 792.9 1170.7 792.4 1176.8 789.9C1182.9 787.4 1188.9 785.3 1196.3 784.4C1203.7 783.5 1212.4 784.2 1221.1 784.7C1229.9 785.1 1241.9 784.4 1248.7 787.2C1255.5 790.0 1258.1 795.6 1262.2 801.4C1266.2 807.1 1268.6 814.6 1272.8 821.5C1277.0 828.5 1282.7 836.1 1287.6 842.9C1292.4 849.7 1296.9 856.6 1301.9 862.5C1306.8 868.5 1311.6 873.8 1317.3 878.6C1323.0 883.5 1329.3 888.3 1336.0 891.6C1342.7 894.9 1350.7 897.7 1357.4 898.7C1364.1 899.7 1369.9 898.8 1376.3 897.8C1382.6 896.7 1392.2 893.3 1395.4 892.4" stroke="#d8d8d8" stroke-width="1.25" opacity="0.48"/>
<path d="M970.3 839.3C972.4 843.1 979.2 855.4 983.1 862.1C987.0 868.8 989.8 874.7 993.9 879.5C997.9 884.3 1002.1 887.0 1007.5 890.8C1012.9 894.7 1019.4 900.1 1026.3 902.8C1033.2 905.4 1041.5 906.7 1048.8 906.8C1056.1 906.9 1062.6 905.1 1069.9 903.2C1077.2 901.3 1085.7 898.9 1092.6 895.4C1099.5 891.9 1105.1 887.5 1111.2 882.0C1117.3 876.5 1124.2 871.4 1129.2 862.5C1134.1 853.6 1136.1 839.2 1141.0 828.8C1145.9 818.4 1152.8 806.7 1158.4 800.1C1163.9 793.4 1168.2 791.5 1174.2 789.0C1180.3 786.5 1186.9 785.9 1194.8 785.1C1202.7 784.4 1213.0 784.2 1221.5 784.5C1230.1 784.8 1239.7 783.9 1246.2 787.0C1252.7 790.0 1256.2 797.2 1260.6 802.8C1265.0 808.3 1268.4 813.8 1272.5 820.3C1276.7 826.9 1280.9 834.9 1285.5 842.0C1290.2 849.0 1295.5 856.4 1300.6 862.5C1305.7 868.7 1310.3 873.7 1315.9 878.7C1321.6 883.6 1327.8 888.8 1334.5 892.2C1341.2 895.6 1349.2 897.9 1356.0 898.9C1362.9 899.9 1369.3 899.4 1375.6 898.3C1381.9 897.1 1387.9 894.5 1393.9 891.9C1399.9 889.4 1406.4 886.6 1411.5 882.9C1416.6 879.2 1422.3 871.9 1424.5 869.7" stroke="#d8d8d8" stroke-width="1.39" opacity="0.56"/>
<path d="M1467.3 604.9C1472.1 606.2 1487.9 610.2 1496.3 612.6C1504.8 615.0 1512.7 616.8 1517.9 619.3C1523.1 621.9 1524.5 622.9 1527.5 627.9C1530.5 632.9 1534.1 641.3 1535.9 649.2C1537.7 657.1 1538.0 666.8 1538.2 675.2C1538.4 683.7 1539.0 691.9 1537.2 699.6C1535.4 707.4 1531.1 715.3 1527.3 721.7C1523.5 728.0 1519.4 732.5 1514.3 737.8C1509.2 743.1 1502.9 749.0 1496.8 753.3C1490.7 757.7 1484.3 760.6 1477.9 763.8C1471.4 767.1 1461.4 771.3 1458.1 772.8" stroke="#d8d8d8" stroke-width="1.78" opacity="0.62"/>
<path d="M1536.0 649.9C1536.3 653.9 1537.4 665.5 1537.5 673.7C1537.5 682.0 1537.8 691.5 1536.3 699.3C1534.7 707.1 1531.8 714.1 1528.1 720.6C1524.4 727.0 1516.4 734.9 1514.1 737.8" stroke="#d8d8d8" stroke-width="1.56" opacity="0.41"/>
<path d="M1516.7 617.8C1518.2 619.5 1522.8 622.8 1525.7 628.0C1528.5 633.2 1531.7 641.2 1533.9 649.1C1536.0 657.1 1538.1 667.5 1538.3 675.8C1538.5 684.1 1537.1 691.1 1535.2 698.9C1533.2 706.7 1530.3 716.1 1526.5 722.6C1522.7 729.1 1517.4 732.7 1512.3 737.8C1507.3 742.9 1501.9 749.0 1496.1 753.3C1490.3 757.5 1480.6 761.6 1477.5 763.2" stroke="#d8d8d8" stroke-width="1.22" opacity="0.36"/>
<path d="M1526.3 627.6C1527.8 631.2 1533.4 641.9 1535.1 649.6C1536.8 657.3 1536.3 665.5 1536.6 673.8C1536.9 682.2 1538.4 692.0 1536.9 699.7C1535.4 707.3 1531.8 713.8 1527.8 719.9C1523.8 725.9 1518.2 730.5 1512.7 736.0C1507.3 741.6 1501.0 748.3 1495.1 753.0C1489.2 757.6 1480.3 762.0 1477.4 763.9" stroke="#d8d8d8" stroke-width="1.85" opacity="0.51"/>
<path d="M1525.1 629.0C1526.7 632.6 1532.9 643.0 1534.9 650.7C1537.0 658.5 1537.4 666.9 1537.4 675.2C1537.5 683.6 1537.2 693.0 1535.1 700.7C1533.1 708.4 1529.0 715.1 1525.2 721.4C1521.4 727.7 1517.5 733.0 1512.4 738.4C1507.4 743.9 1500.8 749.9 1494.8 754.1C1488.9 758.3 1479.8 762.1 1476.8 763.7" stroke="#d8d8d8" stroke-width="1.45" opacity="0.38"/>
<path d="M1518.2 621.6C1519.6 622.8 1523.9 624.0 1526.8 628.8C1529.7 633.6 1533.9 642.3 1535.5 650.4C1537.1 658.5 1536.5 668.7 1536.6 677.3C1536.7 686.0 1537.8 694.3 1536.2 702.2C1534.6 710.0 1530.7 718.2 1526.9 724.3C1523.1 730.4 1518.6 733.7 1513.3 738.7C1508.0 743.7 1498.0 751.9 1494.9 754.6" stroke="#d8d8d8" stroke-width="1.16" opacity="0.38"/>
<path d="M1535.6 650.0C1536.2 654.3 1538.9 667.5 1539.3 676.1C1539.7 684.7 1539.8 693.9 1538.0 701.6C1536.2 709.4 1532.4 716.4 1528.5 722.6C1524.6 728.8 1520.0 733.3 1514.7 738.7C1509.4 744.2 1499.5 752.4 1496.5 755.1" stroke="#d8d8d8" stroke-width="1.42" opacity="0.32"/>
<path d="M1469.8 602.2C1474.9 603.4 1491.1 606.3 1500.3 609.6C1509.5 613.0 1519.0 615.8 1525.0 622.2C1531.1 628.6 1534.7 643.9 1536.6 648.3" stroke="#d8d8d8" stroke-width="1.78" opacity="0.50"/>
<path d="M1469.7 602.2C1474.8 603.6 1491.0 606.9 1500.3 610.2C1509.6 613.6 1519.4 616.1 1525.5 622.3C1531.6 628.5 1535.1 643.2 1537.0 647.3" stroke="#d8d8d8" stroke-width="1.68" opacity="0.37"/>
<path d="M1469.8 602.7C1474.6 604.1 1489.5 607.6 1498.4 610.8C1507.4 614.0 1517.0 615.8 1523.3 622.0C1529.5 628.2 1533.9 643.6 1536.0 647.9" stroke="#d8d8d8" stroke-width="1.49" opacity="0.38"/>
<path d="M1467.6 603.0C1472.9 604.2 1490.0 607.2 1499.2 610.5C1508.3 613.7 1516.5 615.9 1522.5 622.4C1528.5 628.9 1533.1 644.9 1535.3 649.4" stroke="#d8d8d8" stroke-width="1.15" opacity="0.46"/>
<path d="M1472.3 602.1C1477.4 603.5 1493.4 607.1 1502.7 610.7C1511.9 614.3 1521.7 617.2 1527.6 623.7C1533.5 630.1 1536.1 645.1 1537.8 649.4" stroke="#d8d8d8" stroke-width="2.02" opacity="0.27"/>
<path d="M1061.9 556.1C1063.9 556.3 1069.9 556.0 1073.5 557.2C1077.2 558.4 1080.2 561.2 1083.9 563.2C1087.6 565.1 1088.1 567.9 1095.8 569.0C1103.5 570.1 1116.2 570.0 1130.2 569.9C1144.2 569.7 1163.1 568.6 1179.9 568.0C1196.6 567.4 1212.3 566.4 1230.6 566.2C1248.9 565.9 1271.1 566.0 1289.8 566.3C1308.6 566.7 1332.8 568.7 1343.2 568.1C1353.6 567.5 1349.2 564.6 1352.2 562.8C1355.2 561.1 1359.7 558.3 1361.1 557.4" stroke="#d8d8d8" stroke-width="1.78" opacity="0.62"/>
<path d="M1084.4 563.9C1086.3 565.0 1088.1 568.9 1095.6 570.2C1103.1 571.4 1115.3 571.7 1129.4 571.4C1143.4 571.2 1162.9 569.3 1179.8 568.6C1196.7 567.8 1212.6 567.2 1230.8 567.1C1249.0 566.9 1279.5 567.5 1289.3 567.6" stroke="#d8d8d8" stroke-width="1.82" opacity="0.36"/>
<path d="M1072.6 557.2C1074.5 558.1 1080.0 560.6 1083.7 562.6C1087.5 564.6 1087.4 568.1 1095.0 569.3C1102.6 570.6 1115.2 570.5 1129.3 570.3C1143.4 570.1 1162.8 568.8 1179.6 568.1C1196.4 567.4 1211.7 566.3 1230.0 566.1C1248.3 566.0 1270.7 567.0 1289.4 567.2C1308.1 567.4 1331.7 568.2 1342.1 567.6C1352.5 567.0 1350.4 564.2 1352.0 563.5" stroke="#d8d8d8" stroke-width="1.44" opacity="0.37"/>
<path d="M1072.9 557.2C1074.7 558.3 1080.0 561.5 1083.6 563.6C1087.3 565.7 1087.2 568.7 1094.7 569.9C1102.1 571.0 1114.3 570.7 1128.4 570.3C1142.4 570.0 1162.1 568.5 1178.9 567.9C1195.7 567.4 1210.9 567.3 1229.1 567.1C1247.3 566.9 1269.4 566.7 1288.3 566.9C1307.3 567.0 1332.3 568.4 1342.6 567.8C1353.0 567.2 1349.3 564.2 1350.6 563.4" stroke="#d8d8d8" stroke-width="1.07" opacity="0.49"/>
<path d="M1085.6 562.9C1087.5 563.9 1089.5 567.8 1097.2 569.0C1104.9 570.2 1117.7 570.3 1131.7 570.1C1145.7 569.9 1164.4 568.4 1181.2 567.9C1197.9 567.5 1213.8 567.7 1232.2 567.4C1250.6 567.2 1273.1 566.4 1291.6 566.6C1310.1 566.8 1334.7 568.3 1343.4 568.6" stroke="#d8d8d8" stroke-width="1.09" opacity="0.45"/>
<path d="M1061.8 556.4C1063.6 556.7 1069.0 557.2 1072.6 558.4C1076.1 559.6 1079.1 561.8 1082.9 563.7C1086.7 565.5 1087.7 568.3 1095.5 569.6C1103.3 570.9 1115.7 571.5 1129.8 571.4C1143.9 571.3 1163.3 570.0 1180.0 569.3C1196.7 568.6 1211.9 567.6 1230.1 567.2C1248.3 566.7 1270.8 566.2 1289.4 566.6C1308.0 567.0 1333.0 569.0 1341.7 569.4" stroke="#d8d8d8" stroke-width="1.16" opacity="0.29"/>
<path d="M1080.8 620.2C1084.8 619.8 1096.8 618.5 1104.9 617.8C1113.1 617.1 1117.2 616.3 1129.8 616.1C1142.3 615.9 1163.3 616.6 1180.1 616.6C1196.9 616.5 1210.9 615.7 1230.8 615.8C1250.7 616.0 1276.3 617.3 1299.8 617.5C1323.2 617.8 1354.8 618.5 1371.4 617.6C1388.1 616.7 1395.0 613.1 1399.8 612.2" stroke="#d8d8d8" stroke-width="1.78" opacity="0.62"/>
<path d="M1081.3 620.5C1085.3 620.1 1096.9 618.7 1105.3 618.2C1113.6 617.8 1118.7 617.7 1131.3 617.6C1143.9 617.6 1164.3 618.1 1181.0 617.8C1197.7 617.6 1211.8 616.3 1231.7 616.3C1251.6 616.3 1276.8 617.6 1300.3 617.8C1323.8 618.1 1360.6 617.9 1372.7 617.9" stroke="#d8d8d8" stroke-width="1.28" opacity="0.38"/>
<path d="M1081.2 620.4C1085.2 620.0 1097.2 619.1 1105.4 618.2C1113.7 617.4 1118.1 615.7 1130.6 615.4C1143.1 615.0 1163.5 616.2 1180.3 616.1C1197.1 616.1 1211.4 615.0 1231.5 615.2C1251.6 615.4 1277.4 616.9 1300.7 617.3C1324.1 617.7 1359.7 617.6 1371.5 617.6" stroke="#d8d8d8" stroke-width="1.00" opacity="0.35"/>
<path d="M1080.8 620.9C1084.9 620.7 1097.3 620.0 1105.5 619.4C1113.7 618.8 1117.6 617.5 1130.1 617.2C1142.5 617.0 1163.5 617.9 1180.3 617.9C1197.1 617.9 1210.9 617.3 1230.9 617.3C1250.9 617.3 1276.7 617.9 1300.2 618.1C1323.8 618.2 1360.3 618.3 1372.3 618.4" stroke="#d8d8d8" stroke-width="1.87" opacity="0.52"/>
<path d="M1130.0 617.1C1138.3 617.0 1163.1 616.4 1179.9 616.3C1196.7 616.2 1210.8 616.3 1230.9 616.5C1251.1 616.7 1277.0 617.5 1300.6 617.6C1324.2 617.7 1356.0 618.2 1372.6 617.3C1389.2 616.4 1395.5 613.1 1400.1 612.3" stroke="#d8d8d8" stroke-width="1.71" opacity="0.40"/>
<path d="M1081.1 619.5C1085.1 619.1 1096.9 617.4 1105.0 616.8C1113.1 616.3 1117.1 616.3 1129.6 616.0C1142.0 615.7 1163.0 615.4 1179.8 615.3C1196.6 615.2 1210.4 615.4 1230.3 615.5C1250.2 615.7 1287.8 616.2 1299.3 616.4" stroke="#d8d8d8" stroke-width="1.80" opacity="0.48"/>
<path d="M1087.9 622.4C1100.0 622.0 1134.8 620.4 1160.2 619.9C1185.6 619.4 1213.6 619.2 1240.2 619.2C1266.8 619.2 1296.6 620.5 1319.9 620.1C1343.1 619.7 1369.9 617.4 1379.9 616.9" stroke="#d8d8d8" stroke-width="1.78" opacity="0.45"/>
<path d="M1159.4 620.1C1172.8 619.7 1212.9 618.2 1239.6 618.1C1266.4 618.0 1296.8 619.7 1320.1 619.6C1343.4 619.4 1369.5 617.6 1379.4 617.2" stroke="#d8d8d8" stroke-width="1.02" opacity="0.26"/>
<path d="M1088.1 622.1C1100.2 621.6 1135.2 619.9 1160.6 619.3C1186.0 618.7 1213.9 618.6 1240.5 618.6C1267.2 618.6 1307.2 619.2 1320.6 619.4" stroke="#d8d8d8" stroke-width="1.71" opacity="0.31"/>
<path d="M1087.3 622.6C1099.4 622.3 1134.6 621.1 1160.0 620.4C1185.4 619.8 1213.2 619.0 1239.8 618.9C1266.4 618.9 1296.3 620.5 1319.6 620.2C1342.9 619.9 1369.8 617.6 1379.8 617.1" stroke="#d8d8d8" stroke-width="1.86" opacity="0.30"/>
<path d="M1087.5 623.3C1099.5 622.9 1134.1 621.7 1159.6 621.1C1185.1 620.5 1213.8 619.8 1240.5 619.8C1267.1 619.7 1296.3 621.1 1319.5 620.8C1342.8 620.5 1369.9 618.5 1380.0 618.0" stroke="#d8d8d8" stroke-width="1.57" opacity="0.30"/>
<path d="M1048.8 605.3C1051.7 606.3 1060.6 608.4 1066.1 610.9C1071.6 613.5 1077.9 617.1 1081.8 620.8C1085.6 624.4 1087.5 628.4 1089.3 632.9C1091.1 637.4 1091.4 641.4 1092.7 647.9C1094.1 654.3 1096.4 663.9 1097.4 671.7C1098.5 679.6 1099.2 687.8 1099.0 695.0C1098.7 702.2 1097.5 708.8 1096.1 714.9C1094.8 721.1 1091.7 729.0 1090.9 731.8" stroke="#d8d8d8" stroke-width="1.78" opacity="0.65"/>
<path d="M1065.6 609.7C1068.3 611.6 1078.2 617.1 1082.1 620.8C1086.1 624.6 1087.5 627.9 1089.3 632.3C1091.1 636.6 1091.7 640.4 1093.2 646.9C1094.7 653.3 1097.3 663.1 1098.3 671.1C1099.4 679.1 1099.6 687.7 1099.3 694.9C1099.0 702.1 1097.0 711.0 1096.6 714.3" stroke="#d8d8d8" stroke-width="1.39" opacity="0.60"/>
<path d="M1064.9 609.9C1067.7 611.6 1077.6 616.6 1081.4 620.3C1085.3 624.1 1086.2 627.8 1088.0 632.4C1089.8 636.9 1090.9 641.0 1092.4 647.6C1093.9 654.2 1096.2 664.0 1097.2 672.0C1098.1 679.9 1098.4 688.4 1098.2 695.4C1098.0 702.4 1097.2 707.8 1096.0 714.0C1094.8 720.1 1091.8 729.3 1091.0 732.4" stroke="#d8d8d8" stroke-width="1.91" opacity="0.52"/>
<path d="M1079.8 619.4C1081.2 621.4 1086.4 626.9 1088.3 631.6C1090.2 636.3 1089.8 641.1 1091.3 647.5C1092.7 654.0 1095.6 662.5 1096.8 670.3C1098.0 678.0 1098.2 690.1 1098.5 694.0" stroke="#d8d8d8" stroke-width="1.54" opacity="0.37"/>
<path d="M1081.1 621.8C1082.3 623.8 1086.2 629.2 1088.1 633.8C1090.0 638.4 1091.3 642.7 1092.7 649.2C1094.0 655.6 1095.1 664.4 1096.1 672.3C1097.0 680.1 1098.4 689.0 1098.2 696.2C1097.9 703.4 1095.0 712.3 1094.4 715.5" stroke="#d8d8d8" stroke-width="1.41" opacity="0.45"/>
<path d="M1066.3 610.2C1069.1 611.9 1079.1 616.9 1083.0 620.7C1086.9 624.5 1088.0 628.4 1089.8 632.8C1091.7 637.2 1092.5 640.7 1094.1 647.0C1095.7 653.2 1098.2 662.3 1099.3 670.2C1100.3 678.1 1100.9 686.8 1100.5 694.2C1100.1 701.6 1097.4 711.2 1096.8 714.6" stroke="#d8d8d8" stroke-width="1.48" opacity="0.45"/>
<path d="M1422.6 604.5C1420.2 605.3 1412.5 607.2 1407.9 609.2C1403.2 611.2 1399.4 613.8 1394.7 616.3C1390.1 618.8 1384.4 621.2 1379.9 624.0C1375.3 626.8 1369.4 631.6 1367.3 633.1" stroke="#d8d8d8" stroke-width="1.78" opacity="0.65"/>
<path d="M1422.3 604.0C1419.9 604.6 1412.6 605.6 1408.0 607.6C1403.4 609.7 1399.5 614.0 1394.7 616.5C1390.0 619.0 1384.4 620.1 1379.6 622.7C1374.8 625.2 1368.4 630.1 1366.2 631.6" stroke="#d8d8d8" stroke-width="1.67" opacity="0.53"/>
<path d="M1423.6 605.6C1421.1 606.4 1413.6 608.4 1409.0 610.4C1404.3 612.4 1400.5 615.2 1395.7 617.7C1390.9 620.2 1382.8 624.1 1380.2 625.4" stroke="#d8d8d8" stroke-width="1.96" opacity="0.45"/>
<path d="M1420.7 606.1C1418.3 606.7 1410.7 607.8 1406.3 609.8C1401.9 611.8 1398.8 615.7 1394.1 618.1C1389.5 620.5 1383.2 621.6 1378.4 624.3C1373.5 627.0 1367.3 632.6 1365.1 634.2" stroke="#d8d8d8" stroke-width="1.62" opacity="0.31"/>
<path d="M1421.7 605.9C1419.3 606.4 1411.6 607.0 1406.9 608.9C1402.2 610.8 1398.1 614.5 1393.6 617.3C1389.1 620.1 1382.1 624.3 1379.8 625.7" stroke="#d8d8d8" stroke-width="1.71" opacity="0.37"/>
<path d="M1420.8 603.4C1418.4 604.2 1411.0 606.5 1406.4 608.6C1401.8 610.6 1397.8 613.5 1393.1 615.7C1388.5 617.9 1380.9 620.8 1378.4 621.9" stroke="#d8d8d8" stroke-width="1.40" opacity="0.56"/>
<path d="M1354.1 638.3C1352.8 640.7 1348.3 647.9 1346.2 652.9C1344.0 657.8 1341.9 663.1 1341.0 668.0C1340.2 672.9 1340.7 677.6 1341.1 682.2C1341.5 686.9 1342.1 689.5 1343.2 695.7C1344.4 702.0 1347.4 715.7 1348.2 719.7" stroke="#d8d8d8" stroke-width="1.78" opacity="0.45"/>
<path d="M1341.5 667.4C1341.6 669.9 1341.7 677.5 1342.0 682.1C1342.3 686.7 1343.0 693.0 1343.2 695.2" stroke="#d8d8d8" stroke-width="1.69" opacity="0.30"/>
<path d="M1340.0 669.5C1340.2 671.8 1340.7 678.7 1341.1 683.2C1341.5 687.8 1341.1 690.5 1342.4 696.9C1343.8 703.2 1347.9 717.2 1349.0 721.2" stroke="#d8d8d8" stroke-width="1.64" opacity="0.44"/>
<path d="M1353.2 638.7C1351.8 641.0 1347.0 647.9 1344.9 652.6C1342.9 657.4 1341.5 662.7 1340.7 667.4C1339.9 672.2 1339.6 676.4 1340.0 681.2C1340.4 685.9 1342.6 693.7 1343.1 696.2" stroke="#d8d8d8" stroke-width="1.30" opacity="0.41"/>
<path d="M1355.4 638.7C1353.9 641.2 1348.2 648.7 1346.0 653.5C1343.8 658.4 1342.9 663.0 1342.2 667.9C1341.6 672.9 1342.0 678.4 1342.2 683.2C1342.3 687.9 1342.1 690.4 1343.3 696.6C1344.5 702.8 1348.5 716.4 1349.5 720.4" stroke="#d8d8d8" stroke-width="1.65" opacity="0.20"/>
<path d="M1207.8 684.3C1213.1 686.1 1239.0 691.2 1239.5 694.7C1240.1 698.2 1215.9 703.6 1211.2 705.4" stroke="#d8d8d8" stroke-width="1.78" opacity="0.70"/>
<path d="M1208.5 683.6C1213.7 685.3 1239.1 690.4 1239.7 694.0C1240.4 697.5 1216.9 703.0 1212.4 704.8" stroke="#d8d8d8" stroke-width="1.64" opacity="0.51"/>
<path d="M1208.1 685.5C1213.4 687.2 1239.4 692.5 1240.0 695.9C1240.6 699.3 1216.5 704.3 1211.7 706.0" stroke="#d8d8d8" stroke-width="1.09" opacity="0.49"/>
<path d="M1207.2 683.4C1212.4 685.3 1237.7 691.3 1238.3 694.9C1238.9 698.5 1215.2 703.4 1210.6 705.1" stroke="#d8d8d8" stroke-width="1.23" opacity="0.68"/>
<path d="M1207.4 683.7C1212.7 685.3 1238.6 690.1 1239.2 693.6C1239.9 697.1 1216.1 702.7 1211.4 704.5" stroke="#d8d8d8" stroke-width="2.09" opacity="0.51"/>
<path d="M1206.9 683.7C1212.2 685.5 1237.9 690.8 1238.6 694.4C1239.3 697.9 1215.6 703.2 1211.0 705.0" stroke="#d8d8d8" stroke-width="1.70" opacity="0.68"/>
<path d="M1211.5 705.2C1210.9 701.7 1208.4 687.7 1207.8 684.2" stroke="#d8d8d8" stroke-width="1.78" opacity="0.70"/>
<path d="M1211.9 704.7C1211.1 701.2 1208.3 687.5 1207.6 684.0" stroke="#d8d8d8" stroke-width="1.19" opacity="0.68"/>
<path d="M1212.3 704.0C1211.8 700.5 1209.7 686.7 1209.2 683.2" stroke="#d8d8d8" stroke-width="1.56" opacity="0.62"/>
<path d="M1211.4 705.1C1210.8 701.6 1208.4 687.4 1207.7 683.9" stroke="#d8d8d8" stroke-width="1.82" opacity="0.58"/>
<path d="M1211.3 705.5C1210.7 702.0 1208.3 687.9 1207.7 684.4" stroke="#d8d8d8" stroke-width="1.42" opacity="0.53"/>
<path d="M1212.4 706.1C1211.9 702.7 1209.6 688.9 1209.0 685.4" stroke="#d8d8d8" stroke-width="1.17" opacity="0.65"/>
 <path d="M969.0 655.8L1008.0 653.9L1008.0 672.5L1039.4 675.2L1040.4 699.3L1010.7 702.1L1011.6 727.0L977.0 727.0L971.0 703.9L947.8 700.2L943.0 678.9L969.0 674.3z" fill="url(#dpadg)" stroke="none"/><path d="M968.1 656.1L1007.7 654.4L1008.6 673.5L1040.3 674.9L1039.3 698.4L1011.7 701.7L1011.0 726.2L976.7 726.6L971.5 703.2L947.7 701.1L942.9 678.1L968.8 673.7z" stroke="#eee" stroke-width="1.12" opacity="0.63" fill="none" stroke-linejoin="round"/><path d="M968.6 656.5L1007.5 653.0L1007.9 672.5L1038.6 675.2L1040.7 699.9L1011.6 702.2L1012.3 726.2L977.6 728.0L970.9 703.4L947.2 699.6L942.8 678.7L968.3 675.0z" stroke="#eee" stroke-width="1.98" opacity="0.46" fill="none" stroke-linejoin="round"/><path d="M969.3 655.7L1008.0 653.9L1007.9 673.1L1040.4 674.7L1040.1 698.3L1010.5 701.6L1010.9 727.8L977.0 726.4L970.3 704.1L948.5 701.1L943.5 679.5L968.3 673.5z" stroke="#eee" stroke-width="1.70" opacity="0.65" fill="none" stroke-linejoin="round"/>
 <path d="M1104.4 796.6C1103.6 801.0 1101.4 805.6 1098.4 809.2C1095.3 812.8 1090.8 816.0 1086.1 818.0C1081.4 820.0 1075.5 821.2 1070.1 821.2C1064.6 821.3 1058.5 820.2 1053.4 818.3C1048.3 816.4 1043.2 813.3 1039.5 809.8C1035.7 806.3 1032.6 801.7 1030.9 797.3C1029.3 792.9 1028.8 787.8 1029.6 783.4C1030.4 779.0 1032.6 774.4 1035.6 770.8C1038.7 767.2 1043.2 764.0 1047.9 762.0C1052.6 760.0 1058.5 758.8 1063.9 758.8C1069.4 758.7 1075.5 759.8 1080.6 761.7C1085.7 763.6 1090.8 766.7 1094.5 770.2C1098.3 773.7 1101.4 778.3 1103.1 782.7C1104.7 787.1 1105.2 792.2 1104.4 796.6z" fill="#060606" stroke="none"/><path d="M1104.2 796.5C1103.3 801.0 1101.0 805.7 1098.0 809.3C1095.0 813.0 1090.7 816.2 1086.1 818.2C1081.5 820.2 1075.8 821.3 1070.4 821.2C1064.9 821.2 1058.5 820.0 1053.3 818.1C1048.2 816.3 1043.3 813.6 1039.6 810.1C1035.8 806.6 1032.3 801.7 1030.7 797.2C1029.0 792.8 1028.9 787.6 1029.8 783.1C1030.6 778.7 1032.7 774.1 1035.7 770.6C1038.8 767.2 1043.3 764.3 1047.9 762.4C1052.6 760.4 1058.1 759.0 1063.6 758.9C1069.0 758.8 1075.5 760.0 1080.6 762.0C1085.8 763.9 1090.6 767.1 1094.4 770.5C1098.2 774.0 1101.8 778.1 1103.4 782.4C1105.0 786.7 1105.1 792.0 1104.2 796.5z" stroke="#d8d8d8" stroke-width="1.78" opacity="0.55"/>
<path d="M1105.9 798.5C1104.8 800.6 1102.7 807.8 1099.5 811.1C1096.2 814.4 1091.3 816.5 1086.6 818.4C1082.0 820.2 1077.0 822.0 1071.5 822.3C1065.9 822.6 1058.7 822.0 1053.4 820.0C1048.1 818.1 1043.4 814.0 1039.7 810.4C1035.9 806.8 1032.7 803.1 1031.1 798.7C1029.4 794.3 1028.9 788.5 1029.9 784.2C1030.8 779.9 1033.7 776.2 1036.7 772.9C1039.7 769.5 1043.1 766.2 1047.9 764.0C1052.6 761.8 1062.4 760.2 1065.3 759.5" stroke="#d8d8d8" stroke-width="1.30" opacity="0.39"/>
<path d="M1085.8 818.2C1083.3 818.8 1076.0 821.6 1070.7 821.9C1065.3 822.2 1058.8 821.8 1053.5 819.9C1048.1 818.0 1042.4 814.4 1038.8 810.8C1035.1 807.1 1033.0 802.8 1031.6 798.2C1030.1 793.6 1029.2 787.8 1030.0 783.2C1030.9 778.6 1033.8 774.1 1036.8 770.7C1039.8 767.2 1043.2 764.3 1047.8 762.6C1052.5 760.8 1059.2 759.9 1064.8 759.9C1070.4 759.9 1076.3 760.8 1081.5 762.6C1086.6 764.3 1092.1 767.1 1095.7 770.6C1099.3 774.1 1101.9 781.4 1103.1 783.6" stroke="#d8d8d8" stroke-width="2.05" opacity="0.53"/>
<path d="M1063.3 759.4C1066.1 759.7 1075.0 759.2 1080.1 761.0C1085.2 762.8 1090.0 766.4 1093.9 769.9C1097.7 773.4 1101.6 777.7 1103.2 782.1C1104.9 786.4 1104.9 791.8 1104.0 796.1C1103.1 800.5 1100.9 804.5 1097.7 808.1C1094.6 811.7 1090.2 815.7 1085.3 817.8C1080.4 819.8 1073.7 820.2 1068.4 820.3C1063.2 820.4 1058.4 820.4 1053.6 818.6C1048.8 816.9 1042.0 811.3 1039.6 809.8" stroke="#d8d8d8" stroke-width="1.18" opacity="0.27"/>
<path d="M1041.2 811.4C1039.6 809.2 1033.5 803.0 1031.8 798.4C1030.2 793.8 1030.4 788.4 1031.2 784.0C1032.1 779.7 1033.7 775.4 1036.7 772.1C1039.6 768.7 1044.2 766.0 1048.9 764.0C1053.6 761.9 1059.2 760.2 1064.8 759.9C1070.4 759.6 1079.5 761.6 1082.5 762.0" stroke="#d8d8d8" stroke-width="1.18" opacity="0.54"/>
<path d="M1031.0 796.9C1030.8 794.6 1029.2 787.7 1030.0 783.3C1030.9 778.8 1033.0 773.9 1036.0 770.2C1038.9 766.4 1043.2 762.8 1047.7 760.8C1052.2 758.9 1057.5 758.3 1062.8 758.5C1068.2 758.7 1074.6 759.9 1079.6 761.9C1084.7 763.9 1089.3 766.9 1093.3 770.5C1097.2 774.0 1101.7 778.8 1103.4 783.2C1105.1 787.6 1103.5 794.6 1103.5 796.9" stroke="#d8d8d8" stroke-width="1.96" opacity="0.25"/><path d="M1093.5 774.4C1092.9 779.0 1090.8 783.9 1087.8 787.8C1084.8 791.6 1080.4 795.2 1075.6 797.5C1070.9 799.8 1065.0 801.3 1059.5 801.6C1054.0 801.8 1047.7 801.0 1042.5 799.2C1037.3 797.4 1032.0 794.3 1028.1 790.8C1024.2 787.3 1020.9 782.7 1019.1 778.1C1017.3 773.6 1016.6 768.3 1017.3 763.6C1017.9 759.0 1020.0 754.1 1023.0 750.2C1026.0 746.4 1030.4 742.8 1035.2 740.5C1039.9 738.2 1045.8 736.7 1051.3 736.4C1056.8 736.2 1063.1 737.0 1068.3 738.8C1073.5 740.6 1078.8 743.7 1082.7 747.2C1086.6 750.7 1089.9 755.3 1091.7 759.9C1093.5 764.4 1094.2 769.7 1093.5 774.4z" fill="url(#stkg)" stroke="none"/><path d="M1093.7 774.4C1093.0 779.2 1090.8 784.2 1087.8 788.1C1084.8 791.9 1080.4 795.2 1075.7 797.5C1071.0 799.7 1065.2 801.5 1059.6 801.8C1054.1 802.1 1047.8 800.9 1042.6 799.1C1037.3 797.3 1032.0 794.3 1028.1 790.8C1024.2 787.3 1021.0 782.5 1019.2 778.0C1017.4 773.5 1016.6 768.3 1017.2 763.7C1017.8 759.0 1019.9 753.9 1022.9 750.1C1026.0 746.3 1030.6 743.0 1035.3 740.7C1040.1 738.4 1045.9 736.7 1051.3 736.4C1056.8 736.1 1062.9 736.9 1068.1 738.7C1073.3 740.5 1078.6 743.7 1082.5 747.2C1086.4 750.7 1089.9 755.1 1091.8 759.6C1093.6 764.1 1094.3 769.7 1093.7 774.4z" stroke="#d8d8d8" stroke-width="1.87" opacity="0.85"/>
<path d="M1019.9 779.0C1019.7 776.5 1017.8 768.9 1018.4 764.3C1019.0 759.6 1020.7 754.9 1023.6 751.2C1026.5 747.5 1030.9 744.4 1035.7 742.1C1040.5 739.7 1047.0 737.7 1052.4 737.3C1057.9 736.8 1063.3 737.6 1068.4 739.4C1073.6 741.2 1079.3 744.4 1083.4 748.1C1087.4 751.7 1090.7 756.9 1092.7 761.3C1094.6 765.7 1095.8 770.0 1095.1 774.7C1094.4 779.3 1089.6 786.9 1088.5 789.3" stroke="#d8d8d8" stroke-width="1.64" opacity="0.70"/>
<path d="M1094.8 774.5C1093.7 776.6 1091.3 783.2 1088.4 787.1C1085.6 791.0 1082.3 795.4 1077.6 797.7C1073.0 799.9 1066.2 800.3 1060.7 800.5C1055.1 800.8 1049.5 800.7 1044.4 799.1C1039.2 797.6 1033.7 794.9 1029.8 791.3C1025.9 787.7 1022.9 782.4 1020.9 777.6C1018.9 772.9 1017.3 767.5 1017.9 762.9C1018.4 758.3 1021.2 753.7 1024.2 749.8C1027.2 746.0 1031.1 741.9 1035.8 739.6C1040.6 737.3 1047.2 736.3 1052.7 736.2C1058.3 736.2 1066.5 738.8 1069.2 739.3" stroke="#d8d8d8" stroke-width="2.12" opacity="0.61"/>
<path d="M1026.5 789.7C1025.1 787.4 1020.0 780.6 1018.1 776.2C1016.3 771.8 1015.0 767.8 1015.6 763.2C1016.2 758.7 1019.0 752.9 1022.0 749.0C1025.1 745.1 1029.3 742.1 1034.1 739.8C1038.8 737.6 1047.9 736.3 1050.6 735.6" stroke="#d8d8d8" stroke-width="1.39" opacity="0.70"/>
<path d="M1017.8 777.0C1017.6 774.8 1016.2 768.3 1016.8 763.8C1017.3 759.2 1018.2 753.8 1021.1 749.8C1024.1 745.9 1029.5 742.3 1034.3 740.0C1039.1 737.6 1044.5 736.0 1050.0 735.6C1055.6 735.2 1062.1 735.6 1067.5 737.3C1072.9 739.0 1078.4 742.2 1082.2 745.8C1085.9 749.4 1088.3 754.3 1090.0 759.0C1091.7 763.7 1092.9 769.6 1092.2 774.1C1091.5 778.7 1088.9 782.7 1085.9 786.4C1082.8 790.1 1078.7 793.9 1074.0 796.4C1069.4 798.8 1060.5 800.3 1057.7 801.0" stroke="#d8d8d8" stroke-width="1.76" opacity="0.50"/>
<path d="M1059.0 800.9C1056.2 800.5 1047.2 799.9 1042.1 798.1C1037.0 796.4 1032.4 793.6 1028.4 790.3C1024.5 787.0 1020.6 782.8 1018.6 778.2C1016.6 773.7 1015.8 767.8 1016.7 763.0C1017.5 758.2 1020.6 753.0 1023.7 749.3C1026.7 745.6 1033.2 742.2 1035.2 740.8" stroke="#d8d8d8" stroke-width="2.06" opacity="0.72"/>
<path d="M1059.9 803.2C1057.2 802.6 1048.9 801.5 1043.9 799.7C1038.8 797.9 1033.6 795.9 1029.7 792.4C1025.9 788.9 1022.4 783.2 1020.6 778.5C1018.8 773.8 1018.3 768.7 1018.7 764.2C1019.1 759.8 1020.3 755.4 1023.3 751.8C1026.2 748.1 1031.8 744.6 1036.6 742.2C1041.3 739.7 1049.4 737.9 1051.9 737.1" stroke="#d8d8d8" stroke-width="1.49" opacity="0.78"/>
 <path d="M1382.1 769.7C1383.1 774.2 1382.7 779.5 1381.1 784.1C1379.5 788.7 1376.4 793.5 1372.6 797.3C1368.8 801.0 1363.5 804.5 1358.2 806.7C1352.9 808.8 1346.5 810.2 1340.8 810.4C1335.0 810.5 1328.8 809.5 1323.8 807.7C1318.8 805.8 1314.0 802.6 1310.6 799.1C1307.3 795.5 1304.8 790.8 1303.9 786.3C1302.9 781.8 1303.3 776.5 1304.9 771.9C1306.5 767.3 1309.6 762.5 1313.4 758.7C1317.2 755.0 1322.5 751.5 1327.8 749.3C1333.1 747.2 1339.5 745.8 1345.2 745.6C1351.0 745.5 1357.2 746.5 1362.2 748.3C1367.2 750.2 1372.0 753.4 1375.4 756.9C1378.7 760.5 1381.2 765.2 1382.1 769.7z" fill="#050505" stroke="none"/><path d="M1382.0 769.6C1383.0 774.1 1383.0 779.4 1381.4 784.1C1379.9 788.7 1376.5 793.6 1372.7 797.4C1368.9 801.2 1363.9 804.9 1358.5 807.1C1353.1 809.2 1346.2 810.1 1340.5 810.2C1334.7 810.4 1329.0 809.8 1324.1 807.8C1319.2 805.9 1314.3 802.2 1311.0 798.6C1307.7 795.1 1305.0 790.8 1304.1 786.3C1303.1 781.8 1303.7 776.5 1305.3 771.8C1306.9 767.2 1310.1 762.1 1313.8 758.4C1317.5 754.6 1322.4 751.3 1327.6 749.1C1332.9 747.0 1339.5 745.5 1345.3 745.4C1351.1 745.2 1357.3 746.3 1362.4 748.3C1367.4 750.2 1372.2 753.3 1375.5 756.9C1378.7 760.4 1381.0 765.0 1382.0 769.6z" stroke="#d8d8d8" stroke-width="1.78" opacity="0.60"/>
<path d="M1306.2 773.3C1307.6 770.7 1311.1 761.6 1314.7 757.7C1318.4 753.9 1323.0 752.0 1328.2 750.2C1333.4 748.4 1339.9 747.0 1345.7 746.9C1351.5 746.7 1357.5 747.4 1362.8 749.1C1368.1 750.9 1374.1 753.8 1377.5 757.4C1380.9 761.0 1382.5 766.6 1383.3 771.0C1384.1 775.3 1383.8 779.2 1382.2 783.6C1380.5 788.0 1377.1 793.6 1373.4 797.5C1369.8 801.5 1365.4 804.9 1360.1 807.3C1354.9 809.6 1344.9 810.9 1341.8 811.7" stroke="#d8d8d8" stroke-width="1.10" opacity="0.58"/>
<path d="M1344.6 747.0C1347.4 747.4 1356.2 747.4 1361.2 749.4C1366.1 751.4 1370.6 755.3 1374.2 759.0C1377.7 762.7 1381.1 767.3 1382.3 771.8C1383.6 776.3 1383.4 781.6 1381.7 786.0C1380.0 790.3 1376.1 794.0 1372.2 797.7C1368.3 801.4 1363.7 805.5 1358.4 808.0C1353.1 810.6 1343.5 812.2 1340.5 813.0" stroke="#d8d8d8" stroke-width="1.27" opacity="0.43"/>
<path d="M1381.9 784.8C1380.4 787.0 1376.4 794.5 1372.6 798.4C1368.7 802.4 1364.0 806.2 1358.8 808.4C1353.6 810.5 1347.0 810.9 1341.2 811.1C1335.4 811.3 1329.2 811.1 1324.0 809.5C1318.9 807.8 1313.6 805.1 1310.3 801.3C1307.1 797.6 1305.5 791.6 1304.5 786.9C1303.5 782.2 1302.8 777.8 1304.1 773.1C1305.5 768.5 1308.6 763.0 1312.5 759.2C1316.3 755.3 1321.5 752.2 1327.1 750.1C1332.6 748.1 1339.9 747.2 1345.5 747.1C1351.2 747.0 1356.1 747.6 1361.0 749.5C1365.9 751.3 1372.7 756.7 1375.1 758.1" stroke="#d8d8d8" stroke-width="1.05" opacity="0.41"/>
<path d="M1324.5 807.1C1322.5 805.8 1315.7 803.0 1312.6 799.6C1309.6 796.2 1307.3 791.2 1306.1 786.7C1304.9 782.1 1304.2 777.2 1305.5 772.5C1306.8 767.8 1310.1 762.3 1313.9 758.4C1317.8 754.5 1322.9 751.1 1328.6 748.9C1334.3 746.8 1342.1 745.7 1348.1 745.6C1354.2 745.6 1360.3 746.8 1364.9 748.7C1369.6 750.7 1372.8 754.0 1376.1 757.4C1379.3 760.8 1383.2 764.9 1384.5 769.2C1385.7 773.5 1385.1 778.6 1383.5 783.4C1381.8 788.3 1376.2 795.9 1374.7 798.4" stroke="#d8d8d8" stroke-width="1.42" opacity="0.48"/>
<path d="M1309.9 798.7C1309.0 796.5 1305.5 790.4 1304.6 785.6C1303.7 780.8 1303.4 774.8 1304.7 770.0C1305.9 765.2 1308.4 760.5 1312.2 756.8C1316.0 753.2 1322.0 750.0 1327.6 748.1C1333.3 746.2 1340.2 745.8 1345.9 745.5C1351.6 745.3 1356.9 745.1 1361.6 746.7C1366.4 748.2 1371.3 750.9 1374.5 754.8C1377.7 758.6 1379.5 765.2 1380.7 769.8C1381.8 774.4 1381.3 780.4 1381.5 782.5" stroke="#d8d8d8" stroke-width="1.16" opacity="0.28"/>
<path d="M1373.6 757.4C1374.9 759.4 1380.7 764.6 1381.5 769.3C1382.3 774.1 1380.2 781.1 1378.3 786.0C1376.4 790.9 1373.8 795.2 1370.2 798.6C1366.5 802.0 1361.3 804.0 1356.3 806.2C1351.2 808.3 1345.6 811.2 1339.9 811.6C1334.3 811.9 1327.5 810.3 1322.4 808.3C1317.2 806.4 1312.5 803.4 1309.1 799.9C1305.8 796.3 1303.0 791.8 1302.1 787.2C1301.2 782.5 1302.0 776.4 1303.6 771.8C1305.2 767.2 1310.2 761.8 1311.6 759.7" stroke="#d8d8d8" stroke-width="1.38" opacity="0.56"/><path d="M1389.7 762.8C1390.9 768.0 1391.0 774.3 1389.4 779.6C1387.7 784.9 1384.0 790.6 1379.9 794.8C1375.8 799.1 1370.4 803.0 1364.8 805.4C1359.1 807.8 1352.2 809.2 1346.1 809.3C1339.9 809.4 1333.3 808.1 1327.8 805.8C1322.4 803.5 1316.7 799.6 1313.1 795.5C1309.5 791.4 1307.4 786.1 1306.3 781.0C1305.1 775.8 1304.9 770.0 1306.5 764.6C1308.0 759.3 1311.4 753.3 1315.6 749.0C1319.7 744.6 1325.5 740.9 1331.2 738.5C1336.9 736.1 1343.7 734.8 1349.9 734.8C1356.0 734.7 1362.6 735.9 1368.0 738.2C1373.4 740.4 1378.6 744.1 1382.2 748.3C1385.9 752.4 1388.5 757.6 1389.7 762.8z" stroke="#d8d8d8" stroke-width="1.87" opacity="0.80"/>
<path d="M1389.1 778.8C1387.6 781.1 1384.4 788.2 1380.5 792.5C1376.6 796.8 1371.6 801.7 1365.7 804.4C1359.7 807.1 1351.4 808.8 1345.0 808.6C1338.6 808.5 1332.4 806.1 1327.3 803.8C1322.1 801.4 1317.7 798.7 1314.2 794.5C1310.7 790.4 1307.4 784.2 1306.3 778.8C1305.1 773.3 1305.7 767.2 1307.1 762.0C1308.5 756.8 1311.1 751.7 1314.9 747.6C1318.7 743.6 1324.1 740.0 1329.8 737.6C1335.4 735.1 1342.5 733.1 1348.9 732.9C1355.4 732.8 1362.7 734.2 1368.4 736.6C1374.1 739.0 1380.7 745.4 1383.1 747.1" stroke="#d8d8d8" stroke-width="2.12" opacity="0.74"/>
<path d="M1380.8 749.1C1382.1 751.7 1387.3 759.1 1388.6 764.4C1389.9 769.8 1390.3 776.0 1388.6 781.2C1386.9 786.3 1382.4 790.9 1378.3 795.2C1374.3 799.5 1369.8 804.8 1364.3 807.1C1358.9 809.4 1351.8 809.3 1345.6 809.0C1339.3 808.8 1332.5 807.7 1327.0 805.8C1321.4 803.8 1316.3 801.1 1312.5 797.2C1308.7 793.4 1305.1 788.1 1304.0 782.7C1302.9 777.2 1304.4 770.0 1306.1 764.6C1307.8 759.1 1312.7 752.4 1314.0 749.9" stroke="#d8d8d8" stroke-width="1.34" opacity="0.74"/>
<path d="M1313.3 796.3C1312.0 794.0 1306.4 787.4 1305.3 782.3C1304.2 777.2 1304.8 771.4 1306.7 765.8C1308.5 760.2 1312.1 753.5 1316.1 748.9C1320.2 744.4 1325.1 740.9 1330.9 738.7C1336.7 736.4 1344.8 735.6 1350.9 735.5C1356.9 735.4 1362.1 735.8 1367.3 738.0C1372.6 740.2 1378.4 744.3 1382.4 748.8C1386.3 753.2 1389.5 762.0 1390.9 764.7" stroke="#d8d8d8" stroke-width="2.14" opacity="0.49"/>
<path d="M1307.1 763.4C1308.4 761.0 1310.6 753.3 1314.6 749.1C1318.5 744.8 1324.9 740.0 1330.8 737.8C1336.7 735.5 1343.9 735.2 1350.0 735.3C1356.0 735.5 1361.9 736.8 1367.1 738.7C1372.3 740.7 1377.6 743.3 1381.2 747.2C1384.9 751.2 1387.5 757.0 1388.9 762.4C1390.3 767.9 1391.0 774.4 1389.5 779.8C1388.1 785.3 1384.3 791.0 1380.0 795.2C1375.7 799.4 1366.3 803.3 1363.5 805.0" stroke="#d8d8d8" stroke-width="2.05" opacity="0.46"/>
<path d="M1328.3 807.4C1326.1 805.6 1318.6 800.4 1315.0 796.2C1311.4 792.0 1307.9 787.4 1306.9 782.2C1305.9 777.1 1307.4 770.5 1308.9 765.2C1310.5 759.9 1312.3 754.7 1316.2 750.5C1320.0 746.2 1325.9 741.9 1331.8 739.6C1337.7 737.2 1345.3 736.7 1351.4 736.5C1357.5 736.2 1362.9 736.0 1368.4 738.1C1374.0 740.2 1381.0 744.8 1384.7 749.1C1388.4 753.5 1389.9 758.9 1390.9 764.2C1391.9 769.6 1392.3 776.0 1390.8 781.2C1389.3 786.4 1383.5 793.0 1382.1 795.4" stroke="#d8d8d8" stroke-width="2.19" opacity="0.51"/>
<path d="M1364.7 804.3C1361.6 805.2 1352.6 809.3 1346.5 809.5C1340.4 809.7 1333.5 807.7 1328.0 805.4C1322.6 803.1 1317.1 799.8 1313.6 795.8C1310.2 791.7 1308.7 786.2 1307.6 781.0C1306.5 775.9 1305.3 769.9 1307.0 764.6C1308.6 759.4 1313.7 753.5 1317.7 749.3C1321.7 745.0 1328.8 740.9 1331.1 739.2" stroke="#d8d8d8" stroke-width="1.52" opacity="0.74"/><path d="M1328.0 745.0C1333.3 740.2 1345.7 736.2 1354.0 736.0C1362.3 735.8 1372.7 739.5 1378.0 744.0C1383.3 748.5 1387.0 756.5 1386.0 763.0C1385.0 769.5 1378.0 778.0 1372.0 783.0C1366.0 788.0 1356.7 792.7 1350.0 793.0C1343.3 793.3 1336.7 789.7 1332.0 785.0C1327.3 780.3 1322.7 771.7 1322.0 765.0C1321.3 758.3 1322.7 749.8 1328.0 745.0z" fill="url(#stkg2)" stroke="#666" stroke-width="1" />
 </g>
 
<path d="M923.700 585.700C930 572 940 561 951.500 554.300C962 548 973 544.500 984.800 542.200C996 539.600 1007 538 1018 537.600C1028 537.200 1037 537.500 1046 538.500C1052 540 1057 542 1060.700 545L1068 558L1053.300 569L1046 559.800C1035 558.800 1025 558.800 1014.400 559.800C1004 561 994 563 984.800 565.400C975 568 966 570.500 957 573.700C946 577.500 935 582 925.500 587.600z" fill="url(#pinkg)"/>
<path d="M1060.700 545L1068 558L1053.300 569L1046 559.800z" fill="#e765b4"/>
<path d="M910.700 608C916 599 923 592 931 586.700C940 581 949 577 958.900 573.700C967 570.800 976 568.400 984.800 566.300C994 564 1004 562 1014.400 560.700C1025 559.800 1035 560.200 1045 561.700L1048.700 575.600L1031 586.700L1029 585.700C1019 585 1009 585 999.600 585.700C989 587 979 589 970 591.300C960 593.700 950 596.500 940.400 599.600C930 603 921 606 911.700 608.500z" fill="url(#redg)"/>
<path d="M1029 570L1045 561.700L1048.700 575.600L1031 586.700z" fill="#a93038"/>
<path d="M1360.600 564.400L1365.200 547.800C1375 545.500 1385 544 1394.800 543.100C1405 542.200 1416 542 1426.300 542.200C1437 543 1447 544 1455.900 545.900C1464 548.500 1472 551.500 1478.100 555.200C1483 558.500 1488 562 1491.100 566.300C1494 571 1496 577 1496.700 583.900C1493 582 1489 580.500 1485.600 579.300C1479 577 1473 575 1467 573.700C1458 571.500 1450 570 1441.100 569.100C1432 568.500 1422 568.500 1413.300 569.100C1403 569.800 1393 570.700 1383.700 571.900z" fill="url(#greeng)"/>
<path d="M1360.600 564.400L1365.200 547.800L1385.600 557L1383.700 571.900z" fill="#35d62a"/>
<path d="M1391.100 585.700L1396.700 572.800C1404 572.400 1411 572.400 1418.900 572.800C1429 573.300 1439 574.300 1448.500 575.600C1459 577.300 1469 579.500 1478.100 582C1486 585 1494 588.500 1500.400 592.200C1505 595 1508 598 1511.500 601.500C1515 606 1517.500 610.500 1518.900 615.400C1516 613 1513 610.500 1509.600 608C1505 605 1501 602 1496.700 599.600C1491 597 1485 594.800 1478.100 593.100C1471 591.500 1463 590.700 1455.900 590.400C1448 590.200 1441 590.500 1433.700 591.300C1426 592.300 1418 593.600 1410.600 595z" fill="url(#cyang)"/>
<path d="M1391.100 585.700L1396.700 572.800L1413.300 581.100L1410.600 595z" fill="#2ad8d0"/>
<g stroke="#fff" fill="none" opacity=".45" stroke-width="1">
<path d="M940 572C965 557 1000 549 1044 549"/><path d="M1046 559.800L1060.700 549M1046 559.800L1053.300 569"/>
<path d="M928 597C955 583 990 575 1028 572.500L1045 562"/><path d="M1029 571L1031 586.700"/>
<path d="M1385.600 557C1410 552 1445 553 1478 566"/><path d="M1385.600 557L1383.700 571.900"/>
<path d="M1413.300 581.100C1440 578 1470 582 1500 597"/><path d="M1413.300 581.100L1410.600 595"/>
</g>

 <g filter="url(#rough)"><path d="M923.5 585.7C928.1 580.5 941.4 561.7 951.6 554.5C961.8 547.2 973.5 545.2 984.6 542.4C995.7 539.5 1007.9 538.0 1018.1 537.4C1028.4 536.8 1038.9 537.4 1046.1 538.6C1053.2 539.9 1057.2 541.7 1060.9 544.9C1064.6 548.2 1067.0 556.0 1068.2 558.2" stroke="#d8d8d8" stroke-width="1.78" opacity="0.60"/>
<path d="M984.4 541.4C990.1 540.8 1008.1 538.3 1018.3 537.7C1028.6 537.1 1039.0 536.7 1046.1 537.9C1053.2 539.1 1057.0 541.7 1060.8 544.9C1064.6 548.1 1067.5 555.1 1068.8 557.1" stroke="#d8d8d8" stroke-width="1.36" opacity="0.52"/>
<path d="M950.7 555.1C956.5 553.0 973.9 545.4 985.0 542.6C996.1 539.7 1007.0 538.7 1017.2 538.1C1027.4 537.4 1041.3 538.3 1046.1 538.4" stroke="#d8d8d8" stroke-width="2.09" opacity="0.37"/>
<path d="M985.4 540.9C991.0 540.2 1009.0 537.2 1019.1 536.6C1029.2 536.0 1041.5 537.1 1046.0 537.2" stroke="#d8d8d8" stroke-width="1.49" opacity="0.56"/>
<path d="M950.5 555.5C956.0 553.5 972.5 546.0 983.6 543.2C994.6 540.5 1006.3 539.5 1016.7 538.9C1027.2 538.2 1038.8 538.5 1046.0 539.6C1053.2 540.7 1056.4 542.1 1059.9 545.4C1063.5 548.7 1066.0 557.1 1067.3 559.4" stroke="#d8d8d8" stroke-width="1.69" opacity="0.37"/><path d="M1365.1 547.7C1370.0 546.9 1384.6 543.9 1394.8 543.0C1404.9 542.1 1416.0 541.9 1426.2 542.3C1436.4 542.8 1447.3 543.7 1456.0 545.8C1464.7 547.9 1472.5 551.7 1478.3 555.1C1484.2 558.4 1488.0 561.3 1491.1 566.1C1494.2 571.0 1495.9 581.1 1496.9 584.1" stroke="#d8d8d8" stroke-width="1.78" opacity="0.60"/>
<path d="M1365.6 547.3C1370.7 546.5 1385.7 543.1 1396.0 542.2C1406.3 541.3 1417.1 541.3 1427.2 541.9C1437.3 542.5 1447.8 543.5 1456.5 545.6C1465.2 547.7 1473.3 551.0 1479.3 554.4C1485.2 557.7 1490.1 563.8 1492.3 565.7" stroke="#d8d8d8" stroke-width="1.95" opacity="0.60"/>
<path d="M1364.3 547.5C1369.2 546.7 1383.5 543.7 1393.7 542.7C1403.9 541.7 1415.2 541.3 1425.4 541.6C1435.6 541.9 1446.2 542.5 1454.9 544.5C1463.7 546.5 1472.0 550.1 1478.0 553.7C1483.9 557.3 1487.4 561.0 1490.5 565.9C1493.6 570.9 1495.6 580.6 1496.6 583.5" stroke="#d8d8d8" stroke-width="1.26" opacity="0.54"/>
<path d="M1365.6 546.5C1370.5 545.7 1385.0 542.4 1395.1 541.6C1405.2 540.9 1415.9 541.3 1426.0 542.0C1436.2 542.6 1447.4 543.5 1456.0 545.5C1464.7 547.6 1472.1 551.0 1477.9 554.3C1483.8 557.6 1487.9 560.4 1491.0 565.3C1494.1 570.1 1495.7 580.2 1496.6 583.2" stroke="#d8d8d8" stroke-width="1.81" opacity="0.45"/>
<path d="M1426.2 542.4C1431.1 542.9 1447.0 543.3 1455.4 545.3C1463.9 547.3 1471.2 551.2 1476.9 554.6C1482.6 557.9 1487.6 563.6 1489.7 565.4" stroke="#d8d8d8" stroke-width="1.29" opacity="0.40"/></g>
 <g filter="url(#blur1)"><circle cx="1446.8" cy="650.5" r="19" fill="url(#gy)"/><path d="M1466.8 650.5C1466.8 654.3 1465.3 658.8 1463.0 661.9C1460.7 665.1 1456.7 668.2 1453.0 669.4C1449.3 670.6 1444.4 670.2 1440.7 669.0C1436.9 667.8 1432.8 665.2 1430.4 662.0C1428.1 658.9 1426.5 654.1 1426.5 650.3C1426.6 646.5 1428.2 642.2 1430.6 639.2C1432.9 636.1 1437.0 633.3 1440.7 632.1C1444.5 630.8 1449.4 630.5 1453.1 631.7C1456.8 632.9 1460.9 636.1 1463.1 639.2C1465.4 642.3 1466.8 646.7 1466.8 650.5z" stroke="#bdbdbd" stroke-width="1.36" opacity="0.50"/>
<path d="M1464.3 662.0C1462.6 663.3 1458.1 668.3 1454.3 669.7C1450.5 671.0 1445.4 671.2 1441.6 670.1C1437.8 668.9 1433.7 666.0 1431.4 662.9C1429.0 659.8 1427.5 655.1 1427.5 651.3C1427.5 647.4 1430.8 641.7 1431.4 639.8" stroke="#bdbdbd" stroke-width="1.11" opacity="0.36"/>
<path d="M1467.0 651.0C1466.4 652.9 1465.7 659.0 1463.4 662.0C1461.2 665.0 1457.1 667.9 1453.4 669.2C1449.7 670.4 1445.1 670.6 1441.4 669.5C1437.6 668.3 1432.7 663.6 1431.0 662.4" stroke="#bdbdbd" stroke-width="1.06" opacity="0.31"/>
<path d="M1431.4 639.2C1432.9 637.9 1437.2 633.1 1440.8 631.7C1444.4 630.4 1449.2 630.0 1453.1 631.2C1456.9 632.4 1461.4 635.8 1463.9 639.1C1466.3 642.3 1467.6 646.9 1467.6 650.6C1467.6 654.4 1466.0 658.6 1463.7 661.7C1461.4 664.8 1455.6 667.8 1454.0 669.0" stroke="#bdbdbd" stroke-width="1.00" opacity="0.37"/>
<path d="M1425.1 650.7C1425.8 648.7 1426.7 642.1 1429.2 638.9C1431.7 635.7 1436.4 633.0 1440.1 631.7C1443.9 630.3 1448.1 629.5 1451.9 630.7C1455.6 632.0 1460.1 636.0 1462.5 639.2C1464.9 642.3 1465.5 648.0 1466.1 649.7" stroke="#bdbdbd" stroke-width="0.99" opacity="0.45"/>
<path d="M1430.1 638.7C1431.8 637.7 1436.2 633.8 1439.9 632.7C1443.6 631.6 1448.7 631.0 1452.6 632.0C1456.4 633.0 1460.7 635.6 1463.1 638.8C1465.5 642.0 1467.0 647.4 1466.9 651.2C1466.8 655.0 1465.0 658.5 1462.5 661.6C1460.0 664.8 1455.8 668.6 1451.9 669.9C1448.0 671.2 1442.9 670.6 1439.2 669.3C1435.5 668.0 1431.7 665.2 1429.6 662.1C1427.4 659.1 1427.0 652.8 1426.5 650.9" stroke="#bdbdbd" stroke-width="1.19" opacity="0.35"/><text x="1446.8" y="657.8" font-size="19.700" fill="#fff" text-anchor="middle" stroke="none">Y</text><circle cx="1392.8" cy="690.7" r="19" fill="url(#gx)"/><path d="M1413.2 690.8C1413.2 694.6 1411.7 699.1 1409.3 702.2C1406.9 705.3 1402.6 708.2 1398.8 709.4C1395.0 710.6 1390.3 710.7 1386.6 709.5C1382.9 708.2 1378.9 705.2 1376.6 702.0C1374.2 698.9 1372.5 694.3 1372.5 690.5C1372.5 686.6 1374.3 682.0 1376.6 679.0C1378.9 675.9 1382.6 673.4 1386.4 672.2C1390.1 671.0 1395.3 670.7 1399.1 671.8C1402.9 673.0 1406.9 676.1 1409.2 679.3C1411.6 682.4 1413.2 687.0 1413.2 690.8z" stroke="#bdbdbd" stroke-width="1.36" opacity="0.50"/>
<path d="M1377.5 701.7C1376.7 699.8 1372.8 694.0 1372.6 690.3C1372.5 686.6 1374.1 682.6 1376.5 679.5C1378.9 676.5 1383.2 673.3 1387.0 671.9C1390.8 670.5 1395.6 670.0 1399.3 671.3C1403.0 672.5 1407.6 678.2 1409.3 679.5" stroke="#bdbdbd" stroke-width="0.96" opacity="0.22"/>
<path d="M1386.3 672.2C1388.4 672.2 1394.9 671.0 1398.8 672.1C1402.7 673.2 1407.3 676.0 1409.6 679.1C1412.0 682.1 1413.1 686.6 1413.0 690.4C1413.0 694.2 1411.6 698.7 1409.3 701.8C1407.1 704.8 1403.2 707.4 1399.5 708.7C1395.9 709.9 1389.3 709.1 1387.2 709.2" stroke="#bdbdbd" stroke-width="0.96" opacity="0.26"/>
<path d="M1376.2 679.9C1377.8 678.8 1381.7 674.4 1385.4 673.2C1389.2 672.0 1394.9 671.7 1398.7 672.8C1402.5 673.9 1406.3 676.5 1408.5 679.5C1410.6 682.5 1411.7 686.9 1411.8 690.9C1411.9 694.9 1411.3 700.3 1409.0 703.4C1406.8 706.5 1400.2 708.4 1398.4 709.4" stroke="#bdbdbd" stroke-width="0.98" opacity="0.45"/>
<path d="M1387.3 709.8C1385.7 708.5 1379.6 705.6 1377.3 702.4C1375.0 699.2 1373.4 694.2 1373.3 690.3C1373.2 686.4 1374.3 682.1 1376.5 679.1C1378.7 676.2 1382.7 673.8 1386.6 672.6C1390.4 671.3 1395.7 670.5 1399.7 671.6C1403.6 672.6 1407.9 675.6 1410.2 678.8C1412.5 682.1 1412.8 689.1 1413.3 691.1" stroke="#bdbdbd" stroke-width="1.32" opacity="0.41"/>
<path d="M1386.5 670.9C1388.5 671.0 1394.4 669.8 1398.1 671.1C1401.8 672.4 1406.4 675.7 1408.7 678.8C1411.0 681.9 1412.0 686.1 1412.0 689.8C1411.9 693.4 1410.7 697.7 1408.4 700.9C1406.1 704.1 1402.0 707.5 1398.2 708.9C1394.4 710.2 1387.7 708.9 1385.5 708.9" stroke="#bdbdbd" stroke-width="1.02" opacity="0.47"/><text x="1392.8" y="698.0" font-size="19.700" fill="#fff" text-anchor="middle" stroke="none">X</text><circle cx="1498.8" cy="696" r="18.5" fill="url(#gb)"/><path d="M1518.7 695.9C1518.7 699.6 1517.2 703.9 1514.9 707.0C1512.7 710.1 1508.7 713.2 1504.9 714.4C1501.2 715.6 1496.3 715.6 1492.6 714.4C1489.0 713.2 1485.2 710.1 1482.9 707.0C1480.7 703.9 1479.1 699.7 1479.0 696.0C1479.0 692.3 1480.5 687.9 1482.7 684.9C1485.0 681.9 1488.9 679.2 1492.6 678.0C1496.2 676.8 1501.1 676.5 1504.8 677.6C1508.5 678.7 1512.5 681.5 1514.8 684.6C1517.1 687.6 1518.6 692.1 1518.7 695.9z" stroke="#bdbdbd" stroke-width="1.36" opacity="0.50"/>
<path d="M1504.6 677.2C1506.4 678.4 1513.2 681.0 1515.5 684.2C1517.7 687.3 1518.2 692.1 1518.0 695.9C1517.9 699.8 1516.6 704.3 1514.4 707.4C1512.1 710.4 1508.2 713.1 1504.6 714.2C1501.0 715.3 1494.7 714.0 1492.7 713.9" stroke="#bdbdbd" stroke-width="1.23" opacity="0.30"/>
<path d="M1481.7 685.3C1483.5 684.0 1488.7 678.9 1492.5 677.6C1496.3 676.2 1501.2 676.1 1504.7 677.4C1508.3 678.7 1511.7 682.3 1513.8 685.4C1515.9 688.5 1517.2 692.2 1517.4 695.8C1517.5 699.4 1517.0 703.9 1514.9 707.1C1512.7 710.3 1508.1 713.7 1504.5 715.0C1500.8 716.2 1496.5 716.0 1492.8 714.6C1489.1 713.3 1484.9 710.2 1482.4 707.0C1479.9 703.8 1478.8 697.5 1478.0 695.6" stroke="#bdbdbd" stroke-width="1.30" opacity="0.23"/>
<path d="M1514.5 706.9C1512.9 708.0 1508.6 712.9 1505.0 713.9C1501.5 714.8 1497.0 714.1 1493.3 712.8C1489.6 711.5 1484.5 707.1 1482.8 705.9" stroke="#bdbdbd" stroke-width="1.43" opacity="0.24"/>
<path d="M1492.1 677.7C1494.1 677.6 1500.5 675.9 1504.3 677.0C1508.0 678.1 1512.2 681.2 1514.6 684.3C1517.1 687.4 1519.0 691.9 1518.9 695.7C1518.9 699.5 1516.6 704.1 1514.3 707.2C1512.1 710.2 1506.7 712.7 1505.2 713.8" stroke="#bdbdbd" stroke-width="1.34" opacity="0.42"/>
<path d="M1504.6 678.1C1506.2 679.3 1512.2 681.9 1514.5 685.1C1516.8 688.2 1518.4 693.3 1518.4 697.2C1518.4 701.1 1516.7 705.4 1514.4 708.3C1512.1 711.3 1508.3 713.8 1504.6 714.9C1500.8 716.1 1495.6 716.4 1491.9 715.3C1488.2 714.2 1484.8 711.4 1482.5 708.4C1480.2 705.4 1478.1 701.0 1478.1 697.3C1478.0 693.6 1481.5 687.9 1482.2 686.1" stroke="#bdbdbd" stroke-width="0.99" opacity="0.35"/><text x="1498.8" y="703.3" font-size="19.700" fill="#fff" text-anchor="middle" stroke="none">B</text><circle cx="1448.2" cy="734.3" r="19.5" fill="url(#ga)"/><path d="M1469.1 734.4C1469.1 738.4 1467.4 742.9 1465.1 746.1C1462.7 749.3 1458.6 752.3 1454.7 753.6C1450.9 754.8 1445.7 754.9 1441.9 753.6C1438.0 752.4 1434.0 749.3 1431.6 746.1C1429.2 742.9 1427.3 738.3 1427.3 734.4C1427.3 730.4 1429.2 725.6 1431.6 722.4C1434.0 719.2 1438.0 716.6 1441.9 715.4C1445.7 714.1 1450.9 713.8 1454.7 714.9C1458.6 716.1 1462.5 719.0 1464.9 722.2C1467.3 725.5 1469.1 730.4 1469.1 734.4z" stroke="#bdbdbd" stroke-width="1.36" opacity="0.50"/>
<path d="M1441.3 753.0C1439.6 752.0 1433.3 749.7 1431.0 746.6C1428.6 743.6 1427.1 738.8 1427.3 734.7C1427.4 730.7 1429.3 725.5 1431.7 722.2C1434.2 718.8 1438.0 716.0 1441.9 714.8C1445.8 713.5 1452.7 714.9 1454.9 715.0" stroke="#bdbdbd" stroke-width="1.08" opacity="0.44"/>
<path d="M1432.3 723.6C1434.1 722.4 1438.9 717.6 1442.9 716.4C1446.9 715.2 1452.2 715.2 1456.0 716.4C1459.9 717.6 1463.8 720.6 1466.1 723.6C1468.3 726.7 1469.4 731.0 1469.4 735.0C1469.4 738.9 1468.6 744.1 1466.2 747.4C1463.9 750.8 1459.3 753.7 1455.5 754.8C1451.7 756.0 1445.3 754.3 1443.2 754.2" stroke="#bdbdbd" stroke-width="0.86" opacity="0.39"/>
<path d="M1454.5 754.6C1452.5 754.5 1446.2 755.5 1442.3 754.3C1438.4 753.2 1433.7 750.8 1431.2 747.7C1428.6 744.6 1426.7 739.7 1426.8 735.7C1426.8 731.6 1429.1 726.7 1431.6 723.5C1434.1 720.3 1437.7 717.6 1441.6 716.5C1445.5 715.3 1451.1 715.4 1455.0 716.4C1459.0 717.5 1463.5 721.7 1465.2 722.8" stroke="#bdbdbd" stroke-width="0.81" opacity="0.48"/>
<path d="M1454.8 714.4C1456.5 715.6 1462.7 718.4 1465.1 721.6C1467.4 724.8 1469.0 729.8 1469.0 733.7C1469.1 737.6 1465.8 743.1 1465.2 745.0" stroke="#bdbdbd" stroke-width="1.08" opacity="0.24"/>
<path d="M1441.7 754.8C1440.1 753.4 1434.5 749.6 1432.1 746.4C1429.7 743.2 1427.4 739.6 1427.3 735.7C1427.1 731.8 1428.6 726.4 1431.1 723.0C1433.5 719.6 1440.0 716.7 1441.7 715.4" stroke="#bdbdbd" stroke-width="1.54" opacity="0.39"/><text x="1448.2" y="741.5999999999999" font-size="19.700" fill="#fff" text-anchor="middle" stroke="none">A</text></g>
 <g stroke="#bdbdbd" stroke-width="1" fill="none" shape-rendering="crispEdges">
<path d="M821 488.500H983.500V582.500"/>
<path d="M1551 403.500H1413.500V548"/>
<path d="M1600.500 488.500H1447.500V583"/>
<path d="M1053.500 770.500H878.500V873"/>
<path d="M1392.500 710.500V772.500H1496.500V716.500"/>
<path d="M1448.500 753V919.500H1593.500"/>
</g>
 <g font-size="19.700" fill="#fff" stroke="none" letter-spacing=".3">
<text x="819.500" y="481">Lock</text>
<text x="819.500" y="511.600">Left Shift</text>
<text x="1443.300" y="399.900">Accelerate</text>
<text x="1443.300" y="423.500">(UP Arrow)</text>
<text x="1600" y="481" text-anchor="end">Unlock</text>
<text x="1601" y="510.400" text-anchor="end">Right Shift</text>
<text x="875.800" y="902.800" text-anchor="middle">Turn</text>
<text x="876.500" y="926.700" text-anchor="middle">(Left / Right)</text>
<text x="1596" y="916.500" text-anchor="end" letter-spacing="0">Doors</text>
<text x="1216.500" y="660.500" text-anchor="middle" fill="#9b9b9b" font-size="19.900" letter-spacing="0">OpenGarages</text>
</g>
 </svg>
 </div>
</div>

</body></html>
